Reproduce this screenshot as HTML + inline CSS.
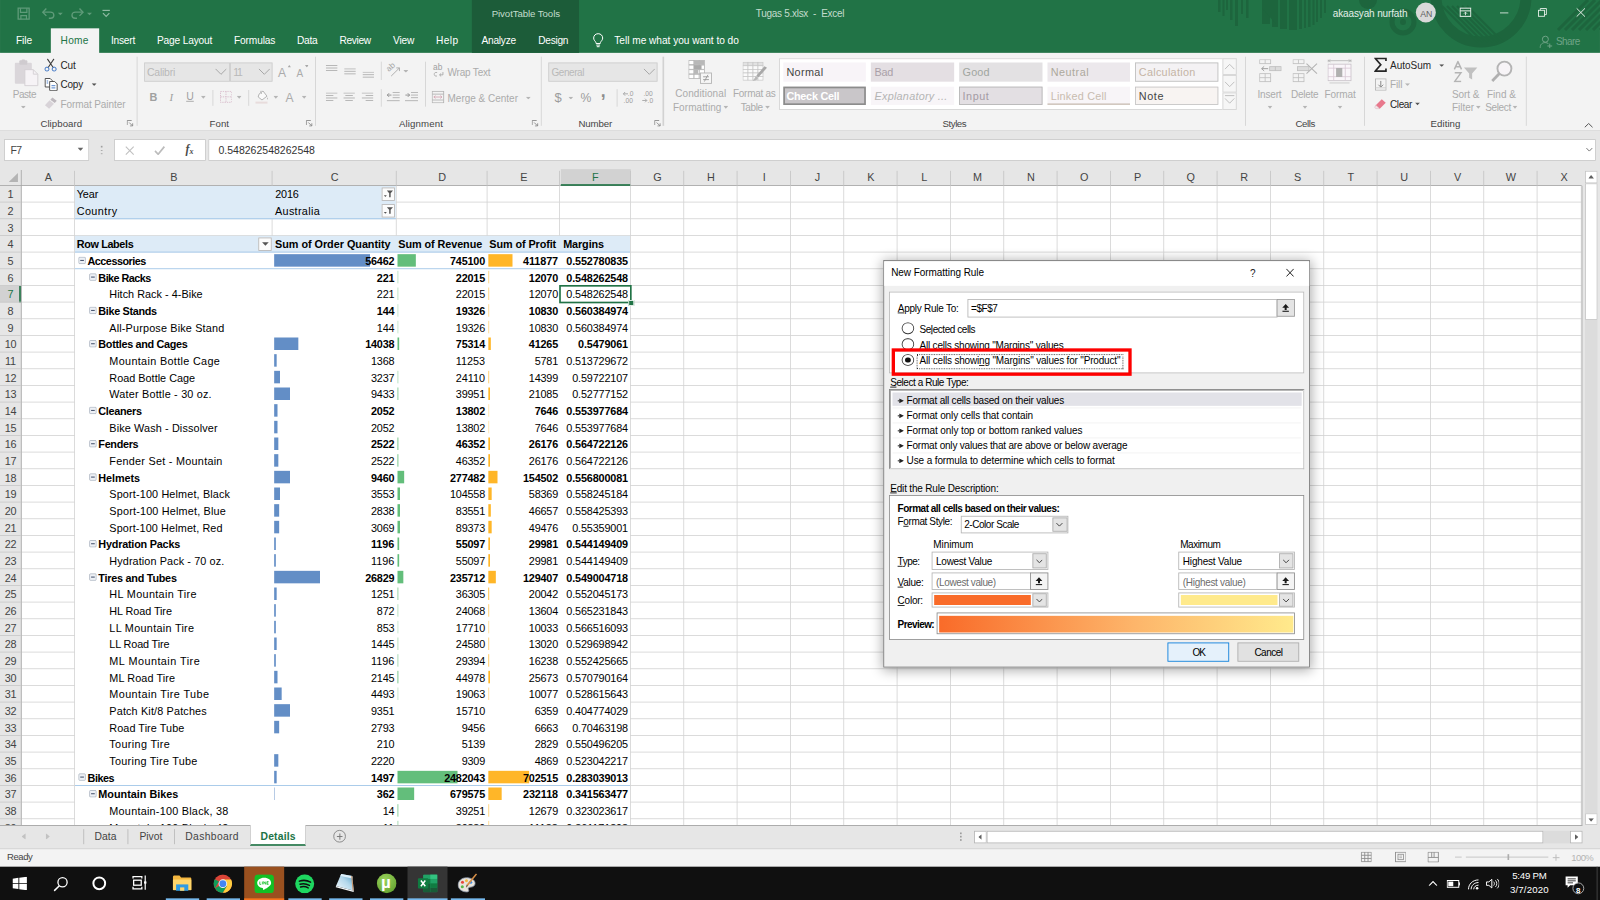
<!DOCTYPE html><html><head><meta charset="utf-8"><title>Excel</title><style>html,body{margin:0;padding:0}
body{width:1600px;height:900px;overflow:hidden;background:#fff;position:relative}
#s{position:absolute;left:0;top:0;width:1920px;height:1080px;transform:scale(.8333333);transform-origin:0 0;font-family:"Liberation Sans",sans-serif;font-size:13px;color:#262626;overflow:hidden;background:#fff}
#s div,#s span,#s svg{position:absolute;box-sizing:border-box;white-space:pre}
.t{line-height:1}
</style></head>
<body><div id="s">
<div style="left:0.00px;top:63.36px;width:1920.00px;height:92.88px;background:#f3f3f3;"></div>
<div style="left:0.00px;top:156.00px;width:1920.00px;height:1.08px;background:#d4d4d4;"></div>
<svg style="left:15.60px;top:70.80px;width:32.40px;height:33.60px;" viewBox="0 0 27 28"><rect x="1.5" y="3.5" width="17" height="21" rx="1" fill="#dad6da"/><rect x="6" y="1" width="8" height="4.5" rx="1" fill="#cfcbcf"/><rect x="8.3" y="0" width="3.4" height="2.5" rx="1" fill="#cfcbcf"/><path d="M11.5 10.5H20L24.5 15V26.5H11.5Z" fill="#f6f3f6" stroke="#d2ced2" stroke-width=".9"/><path d="M20 10.5V15H24.5" fill="none" stroke="#d2ced2" stroke-width=".9"/></svg>
<span style="top:106.72px;font-size:12.00px;line-height:1;color:#ababab;letter-spacing:-0.569px;left:15.36px;">Paste</span>
<svg style="left:25.32px;top:126.96px;width:6.00px;height:3.36px;" viewBox="0 0 5 2.8"><path d="M0 0H5 L2.5 2.8 Z" fill="#b5b5b5"/></svg>
<svg style="left:53.40px;top:70.20px;width:15.60px;height:16.20px;" viewBox="0 0 13 13.5"><path d="M3.2 .5L9 9.2M9.8 .5L4 9.2" stroke="#404040" stroke-width="1.1" fill="none"/><circle cx="2.8" cy="10.8" r="2" fill="none" stroke="#3b73c4" stroke-width="1"/><circle cx="10" cy="10.8" r="2" fill="none" stroke="#3b73c4" stroke-width="1"/></svg>
<span style="top:72.64px;font-size:12.00px;line-height:1;color:#262626;letter-spacing:-0.145px;left:72.48px;">Cut</span>
<svg style="left:52.80px;top:93.00px;width:16.80px;height:16.20px;" viewBox="0 0 14 13.5"><path d="M1 1H6L8 3V9.5H1Z" fill="#fff" stroke="#404040" stroke-width=".9"/><path d="M5.5 4H10.5L13 6.5V13H5.5Z" fill="#fff" stroke="#404040" stroke-width=".9"/><path d="M2.5 3.5H4M2.5 5.5H4M7.3 8.2H11.2M7.3 10.4H11.2" stroke="#3b73c4" stroke-width=".9"/></svg>
<span style="top:95.44px;font-size:12.00px;line-height:1;color:#262626;letter-spacing:-0.223px;left:72.48px;">Copy</span>
<svg style="left:109.80px;top:99.84px;width:6.00px;height:3.36px;" viewBox="0 0 5 2.8"><path d="M0 0H5 L2.5 2.8 Z" fill="#555"/></svg>
<svg style="left:53.40px;top:116.40px;width:16.80px;height:15.60px;" viewBox="0 0 14 13"><path d="M8.2 .8L12.6 4.2L10.6 6.4L6.2 3Z" fill="#bdb8bd"/><path d="M5.4 3.6L9.8 7L5 12.2L.8 8.6Z" fill="#d8d3d8"/></svg>
<span style="top:118.72px;font-size:12.00px;line-height:1;color:#ababab;letter-spacing:-0.097px;left:72.48px;">Format Painter</span>
<span style="top:142.10px;font-size:11.60px;line-height:1;color:#444444;letter-spacing:0.056px;left:48.48px;">Clipboard</span>
<svg style="left:152.40px;top:143.76px;width:8.40px;height:8.40px;" viewBox="0 0 7 7"><path d="M.5 5V.5H5" fill="none" stroke="#8a8a8a" stroke-width=".9"/><path d="M2.5 2.5L6 6M6 3.3V6H3.3" fill="none" stroke="#8a8a8a" stroke-width=".9"/></svg>
<div style="left:164.28px;top:68.40px;width:1.20px;height:82.80px;background:#d2d2d2;"></div>
<div style="left:172.80px;top:74.88px;width:102.72px;height:23.04px;background:#e6e6e6;border:1px solid #cdcdcd;"></div>
<div style="left:276.24px;top:74.88px;width:50.88px;height:23.04px;background:#e6e6e6;border:1px solid #cdcdcd;"></div>
<span style="top:80.53px;font-size:12.60px;line-height:1;color:#b9b9b9;letter-spacing:-0.301px;left:176.40px;">Calibri</span>
<span style="top:80.53px;font-size:12.60px;line-height:1;color:#b9b9b9;letter-spacing:-1.380px;left:279.84px;">11</span>
<svg style="left:258.00px;top:82.20px;width:14.40px;height:8.40px;" viewBox="0 0 12 7"><path d="M.5 .5L6 6L11.5 .5" fill="none" stroke="#a8a8a8" stroke-width="1"/></svg>
<svg style="left:309.60px;top:82.20px;width:14.40px;height:8.40px;" viewBox="0 0 12 7"><path d="M.5 .5L6 6L11.5 .5" fill="none" stroke="#a8a8a8" stroke-width="1"/></svg>
<span style="top:80.13px;font-size:14.50px;line-height:1;color:#ababab;left:333.60px;">A</span>
<svg style="left:345.12px;top:78.00px;width:4.32px;height:2.88px;" viewBox="0 0 3.6 2.4"><path d="M0 2.4H3.6L1.8 0Z" fill="#a8a8a8"/></svg>
<span style="top:82.24px;font-size:12.00px;line-height:1;color:#ababab;left:355.92px;">A</span>
<svg style="left:365.76px;top:78.00px;width:4.32px;height:2.88px;" viewBox="0 0 3.6 2.4"><path d="M0 0H3.6L1.8 2.4Z" fill="#a8a8a8"/></svg>
<span style="top:110.08px;font-size:13.00px;line-height:1;color:#a0a0a0;font-weight:bold;left:179.52px;">B</span>
<span style="top:110.08px;font-size:13.00px;line-height:1;color:#a0a0a0;font-style:italic;left:203.28px;font-family:'Liberation Serif',serif;">I</span>
<span style="top:110.41px;font-size:12.60px;line-height:1;color:#a0a0a0;left:223.44px;text-decoration:underline;">U</span>
<svg style="left:241.32px;top:115.44px;width:6.00px;height:3.36px;" viewBox="0 0 5 2.8"><path d="M0 0H5 L2.5 2.8 Z" fill="#b5b5b5"/></svg>
<div style="left:254.76px;top:108.00px;width:1.20px;height:19.20px;background:#d2d2d2;"></div>
<svg style="left:263.76px;top:109.20px;width:14.40px;height:14.40px;" viewBox="0 0 12 12"><path d="M.5 .5H11.5V11.5H.5ZM6 .5V11.5M.5 6H11.5" fill="none" stroke="#d7b9c9" stroke-width=".9" stroke-dasharray="1.3 1"/></svg>
<svg style="left:284.28px;top:115.44px;width:6.00px;height:3.36px;" viewBox="0 0 5 2.8"><path d="M0 0H5 L2.5 2.8 Z" fill="#b5b5b5"/></svg>
<div style="left:297.72px;top:108.00px;width:1.20px;height:19.20px;background:#d2d2d2;"></div>
<svg style="left:306.00px;top:108.00px;width:16.80px;height:16.80px;" viewBox="0 0 14 14"><path d="M4 4.2L8 1L12 6.2L7 10L3.2 7Z" fill="#fafafa" stroke="#ababab" stroke-width=".9"/><path d="M6 .8C5.6 2 6 3.2 7 4" fill="none" stroke="#ababab" stroke-width=".9"/><path d="M12.4 7.2C13 8.4 13.2 9 12.6 9.6C12 9 12 8.4 12.4 7.2Z" fill="#ababab"/><rect x=".5" y="11.6" width="12" height="2" fill="#e8dcdc"/></svg>
<svg style="left:327.72px;top:115.44px;width:6.00px;height:3.36px;" viewBox="0 0 5 2.8"><path d="M0 0H5 L2.5 2.8 Z" fill="#b5b5b5"/></svg>
<span style="top:110.01px;font-size:14.50px;line-height:1;color:#ababab;left:342.72px;">A</span>
<svg style="left:361.56px;top:115.44px;width:6.00px;height:3.36px;" viewBox="0 0 5 2.8"><path d="M0 0H5 L2.5 2.8 Z" fill="#b5b5b5"/></svg>
<span style="top:142.10px;font-size:11.60px;line-height:1;color:#444444;letter-spacing:0.017px;left:251.52px;">Font</span>
<svg style="left:367.20px;top:143.76px;width:8.40px;height:8.40px;" viewBox="0 0 7 7"><path d="M.5 5V.5H5" fill="none" stroke="#8a8a8a" stroke-width=".9"/><path d="M2.5 2.5L6 6M6 3.3V6H3.3" fill="none" stroke="#8a8a8a" stroke-width=".9"/></svg>
<div style="left:378.12px;top:68.40px;width:1.20px;height:82.80px;background:#d2d2d2;"></div>
<svg style="left:390.60px;top:78.00px;width:15.60px;height:12.00px;" viewBox="0 0 13 10"><path d="M0 0.5H11.5" stroke="#b0b0b0" stroke-width=".9"/><path d="M0 3H11.5" stroke="#b0b0b0" stroke-width=".9"/><path d="M0 5.5H11.5" stroke="#b0b0b0" stroke-width=".9"/></svg>
<svg style="left:412.56px;top:81.60px;width:15.60px;height:12.00px;" viewBox="0 0 13 10"><path d="M0 0.5H11.5" stroke="#b0b0b0" stroke-width=".9"/><path d="M0 3H11.5" stroke="#b0b0b0" stroke-width=".9"/><path d="M0 5.5H11.5" stroke="#b0b0b0" stroke-width=".9"/></svg>
<svg style="left:434.64px;top:86.40px;width:15.60px;height:12.00px;" viewBox="0 0 13 10"><path d="M0 0.5H11.5" stroke="#b0b0b0" stroke-width=".9"/><path d="M0 3H11.5" stroke="#b0b0b0" stroke-width=".9"/><path d="M0 5.5H11.5" stroke="#b0b0b0" stroke-width=".9"/></svg>
<div style="left:457.08px;top:74.40px;width:1.20px;height:21.60px;background:#d2d2d2;"></div>
<svg style="left:463.80px;top:75.00px;width:18.00px;height:18.00px;" viewBox="0 0 15 15"><text x="0" y="0" transform="translate(2.2 9.6) rotate(-42)" font-family="Liberation Sans" font-size="8.2" fill="#a4a4a4">ab</text><path d="M4.5 13.6L12.6 5.6M9.6 5.4H12.8V8.6" fill="none" stroke="#a8a8a8" stroke-width=".9"/></svg>
<svg style="left:483.72px;top:83.76px;width:6.00px;height:3.36px;" viewBox="0 0 5 2.8"><path d="M0 0H5 L2.5 2.8 Z" fill="#b5b5b5"/></svg>
<div style="left:510.12px;top:74.40px;width:1.20px;height:54.00px;background:#d2d2d2;"></div>
<span style="top:76.02px;font-size:10.00px;line-height:1;color:#a0a0a0;left:519.60px;">ab</span>
<svg style="left:519.60px;top:85.68px;width:13.20px;height:7.68px;" viewBox="0 0 11 6.4"><path d="M3.8 .8C1.6 .4 .8 1.6 .8 2.6C.8 3.8 1.8 4.6 3.6 4.4" fill="none" stroke="#a8a8a8" stroke-width=".9"/><path d="M9.6 .4V3.2H6.4M7.8 1.8L6.2 3.2L7.8 4.8" fill="none" stroke="#a8a8a8" stroke-width=".9"/></svg>
<span style="top:80.56px;font-size:12.00px;line-height:1;color:#ababab;letter-spacing:-0.233px;left:537.00px;">Wrap Text</span>
<svg style="left:390.60px;top:111.12px;width:15.60px;height:12.00px;" viewBox="0 0 13 10"><path d="M0 0.5H11.5" stroke="#b0b0b0" stroke-width=".9"/><path d="M0 3H7.5" stroke="#b0b0b0" stroke-width=".9"/><path d="M0 5.5H11.5" stroke="#b0b0b0" stroke-width=".9"/><path d="M0 8H7.5" stroke="#b0b0b0" stroke-width=".9"/></svg>
<svg style="left:412.20px;top:111.12px;width:15.60px;height:12.00px;" viewBox="0 0 13 10"><path d="M0 0.5H11.5" stroke="#b0b0b0" stroke-width=".9"/><path d="M2 3H9.5" stroke="#b0b0b0" stroke-width=".9"/><path d="M0 5.5H11.5" stroke="#b0b0b0" stroke-width=".9"/><path d="M2 8H9.5" stroke="#b0b0b0" stroke-width=".9"/></svg>
<svg style="left:434.40px;top:111.12px;width:15.60px;height:12.00px;" viewBox="0 0 13 10"><path d="M0 0.5H11.5" stroke="#b0b0b0" stroke-width=".9"/><path d="M4 3H11.5" stroke="#b0b0b0" stroke-width=".9"/><path d="M0 5.5H11.5" stroke="#b0b0b0" stroke-width=".9"/><path d="M4 8H11.5" stroke="#b0b0b0" stroke-width=".9"/></svg>
<div style="left:457.08px;top:106.80px;width:1.20px;height:21.60px;background:#d2d2d2;"></div>
<svg style="left:464.40px;top:110.40px;width:16.80px;height:13.20px;" viewBox="0 0 14 11"><path d="M6 .8H13M6 3.4H13M6 6H13M0 9H13" stroke="#b0b0b0" stroke-width=".9"/><path d="M4.8 3.4H.6M2.4 1.6L.6 3.4L2.4 5.2" fill="none" stroke="#8a8a8a" stroke-width=".9"/></svg>
<svg style="left:486.00px;top:110.40px;width:16.80px;height:13.20px;" viewBox="0 0 14 11"><path d="M6 .8H13M6 3.4H13M6 6H13M0 9H13" stroke="#b0b0b0" stroke-width=".9"/><path d="M.4 3.4H4.6M2.8 1.6L4.6 3.4L2.8 5.2" fill="none" stroke="#8a8a8a" stroke-width=".9"/></svg>
<svg style="left:518.40px;top:108.60px;width:15.60px;height:15.60px;" viewBox="0 0 13 13"><rect x=".5" y=".5" width="11.5" height="11.5" fill="none" stroke="#b4b4b4" stroke-width=".9"/><path d="M.5 3.3H12M.5 9.2H12" stroke="#b4b4b4" stroke-width=".9"/><path d="M2.2 6.2H10.3M3.8 4.8L2.2 6.2L3.8 7.6M8.7 4.8L10.3 6.2L8.7 7.6" stroke="#d4a8b4" fill="none" stroke-width=".9"/></svg>
<span style="top:111.76px;font-size:12.00px;line-height:1;color:#ababab;letter-spacing:-0.007px;left:537.00px;">Merge &amp; Center</span>
<svg style="left:631.32px;top:115.92px;width:6.00px;height:3.36px;" viewBox="0 0 5 2.8"><path d="M0 0H5 L2.5 2.8 Z" fill="#b5b5b5"/></svg>
<span style="top:142.10px;font-size:11.60px;line-height:1;color:#444444;letter-spacing:0.135px;left:478.80px;">Alignment</span>
<svg style="left:638.40px;top:143.76px;width:8.40px;height:8.40px;" viewBox="0 0 7 7"><path d="M.5 5V.5H5" fill="none" stroke="#8a8a8a" stroke-width=".9"/><path d="M2.5 2.5L6 6M6 3.3V6H3.3" fill="none" stroke="#8a8a8a" stroke-width=".9"/></svg>
<div style="left:648.96px;top:68.40px;width:1.20px;height:82.80px;background:#d2d2d2;"></div>
<div style="left:657.96px;top:75.36px;width:130.92px;height:22.68px;background:#e6e6e6;border:1px solid #cdcdcd;"></div>
<span style="top:81.04px;font-size:12.00px;line-height:1;color:#b9b9b9;letter-spacing:-0.510px;left:661.68px;">General</span>
<svg style="left:771.60px;top:82.20px;width:14.40px;height:8.40px;" viewBox="0 0 12 7"><path d="M.5 .5L6 6L11.5 .5" fill="none" stroke="#a8a8a8" stroke-width="1"/></svg>
<span style="top:109.43px;font-size:15.60px;line-height:1;color:#9c9c9c;left:665.28px;">$</span>
<svg style="left:682.44px;top:115.92px;width:6.00px;height:3.36px;" viewBox="0 0 5 2.8"><path d="M0 0H5 L2.5 2.8 Z" fill="#b5b5b5"/></svg>
<span style="top:110.04px;font-size:14.60px;line-height:1;color:#9c9c9c;left:696.72px;">%</span>
<span style="top:98.14px;font-size:21.00px;line-height:1;color:#8c8c8c;font-weight:bold;left:720.96px;">,</span>
<div style="left:740.04px;top:106.80px;width:1.20px;height:21.60px;background:#d2d2d2;"></div>
<svg style="left:747.00px;top:108.60px;width:16.80px;height:15.60px;" viewBox="0 0 14 13"><path d="M5.5 3H1M2.6 1.2L.8 3L2.6 4.8" fill="none" stroke="#a4a4a4" stroke-width=".9"/></svg>
<span style="top:109.15px;font-size:8.00px;line-height:1;color:#9c9c9c;left:753.36px;">.0</span>
<span style="top:117.31px;font-size:8.00px;line-height:1;color:#9c9c9c;left:748.32px;">.00</span>
<span style="top:109.15px;font-size:8.00px;line-height:1;color:#9c9c9c;left:772.08px;">.00</span>
<span style="top:117.31px;font-size:8.00px;line-height:1;color:#9c9c9c;left:777.12px;">.0</span>
<svg style="left:769.80px;top:116.64px;width:8.40px;height:7.20px;" viewBox="0 0 7 6"><path d="M.6 3H5M3.4 1.2L5.2 3L3.4 4.8" fill="none" stroke="#a4a4a4" stroke-width=".9"/></svg>
<span style="top:142.10px;font-size:11.60px;line-height:1;color:#444444;letter-spacing:-0.156px;left:694.08px;">Number</span>
<svg style="left:784.80px;top:143.76px;width:8.40px;height:8.40px;" viewBox="0 0 7 7"><path d="M.5 5V.5H5" fill="none" stroke="#8a8a8a" stroke-width=".9"/><path d="M2.5 2.5L6 6M6 3.3V6H3.3" fill="none" stroke="#8a8a8a" stroke-width=".9"/></svg>
<div style="left:795.48px;top:68.40px;width:1.20px;height:82.80px;background:#d2d2d2;"></div>
<svg style="left:826.20px;top:72.00px;width:30.00px;height:29.40px;" viewBox="0 0 25 24.5"><rect x="0.5" y="0.5" width="5.2" height="4.2" fill="#fff" stroke="#b4b4b4" stroke-width=".8"/><rect x="5.7" y="0.5" width="5.2" height="4.2" fill="#fff" stroke="#b4b4b4" stroke-width=".8"/><rect x="10.9" y="0.5" width="5.2" height="4.2" fill="#fff" stroke="#b4b4b4" stroke-width=".8"/><rect x="0.5" y="5.1" width="5.2" height="4.2" fill="#fff" stroke="#b4b4b4" stroke-width=".8"/><rect x="5.7" y="5.1" width="5.2" height="4.2" fill="#fff" stroke="#b4b4b4" stroke-width=".8"/><rect x="10.9" y="5.1" width="5.2" height="4.2" fill="#fff" stroke="#b4b4b4" stroke-width=".8"/><rect x="0.5" y="9.7" width="5.2" height="4.2" fill="#fff" stroke="#b4b4b4" stroke-width=".8"/><rect x="5.7" y="9.7" width="5.2" height="4.2" fill="#fff" stroke="#b4b4b4" stroke-width=".8"/><rect x="10.9" y="9.7" width="5.2" height="4.2" fill="#fff" stroke="#b4b4b4" stroke-width=".8"/><rect x="0.5" y="14.3" width="5.2" height="4.2" fill="#fff" stroke="#b4b4b4" stroke-width=".8"/><rect x="5.7" y="14.3" width="5.2" height="4.2" fill="#fff" stroke="#b4b4b4" stroke-width=".8"/><rect x="10.9" y="14.3" width="5.2" height="4.2" fill="#fff" stroke="#b4b4b4" stroke-width=".8"/><rect x="5.7" y=".5" width="10" height="4.2" fill="#b8b8b8"/><rect x="5.7" y="5.1" width="7.5" height="4.2" fill="#aaaaaa"/><rect x="5.7" y="9.7" width="4" height="4.2" fill="#b8b8b8"/><rect x="12.2" y="13" width="11" height="10.4" fill="#f6f6f6" stroke="#b4b4b4" stroke-width=".9"/><path d="M14.8 16.8H20.6M14.8 19.6H20.6M19.6 14.8L16 21.6" stroke="#9a9a9a" stroke-width=".9"/></svg>
<span style="top:106.48px;font-size:12.00px;line-height:1;color:#ababab;letter-spacing:0.105px;left:810.24px;">Conditional</span>
<span style="top:122.68px;font-size:12.00px;line-height:1;color:#ababab;letter-spacing:0.097px;left:807.48px;">Formatting</span>
<svg style="left:867.72px;top:127.20px;width:6.00px;height:3.36px;" viewBox="0 0 5 2.8"><path d="M0 0H5 L2.5 2.8 Z" fill="#b5b5b5"/></svg>
<svg style="left:891.24px;top:73.80px;width:31.20px;height:25.20px;" viewBox="0 0 26 21"><rect x="0.5" y="0.5" width="5" height="3.6" fill="#e2e2e2" stroke="#c6c6c6" stroke-width=".7"/><rect x="5.5" y="0.5" width="5" height="3.6" fill="#e2e2e2" stroke="#c6c6c6" stroke-width=".7"/><rect x="10.5" y="0.5" width="5" height="3.6" fill="#e2e2e2" stroke="#c6c6c6" stroke-width=".7"/><rect x="15.5" y="0.5" width="5" height="3.6" fill="#e2e2e2" stroke="#c6c6c6" stroke-width=".7"/><rect x="0.5" y="4.1" width="5" height="3.6" fill="#fafafa" stroke="#c6c6c6" stroke-width=".7"/><rect x="5.5" y="4.1" width="5" height="3.6" fill="#fafafa" stroke="#c6c6c6" stroke-width=".7"/><rect x="10.5" y="4.1" width="5" height="3.6" fill="#fafafa" stroke="#c6c6c6" stroke-width=".7"/><rect x="15.5" y="4.1" width="5" height="3.6" fill="#fafafa" stroke="#c6c6c6" stroke-width=".7"/><rect x="0.5" y="7.7" width="5" height="3.6" fill="#fafafa" stroke="#c6c6c6" stroke-width=".7"/><rect x="5.5" y="7.7" width="5" height="3.6" fill="#fafafa" stroke="#c6c6c6" stroke-width=".7"/><rect x="10.5" y="7.7" width="5" height="3.6" fill="#fafafa" stroke="#c6c6c6" stroke-width=".7"/><rect x="15.5" y="7.7" width="5" height="3.6" fill="#fafafa" stroke="#c6c6c6" stroke-width=".7"/><rect x="0.5" y="11.3" width="5" height="3.6" fill="#fafafa" stroke="#c6c6c6" stroke-width=".7"/><rect x="5.5" y="11.3" width="5" height="3.6" fill="#fafafa" stroke="#c6c6c6" stroke-width=".7"/><rect x="10.5" y="11.3" width="5" height="3.6" fill="#fafafa" stroke="#c6c6c6" stroke-width=".7"/><rect x="15.5" y="11.3" width="5" height="3.6" fill="#fafafa" stroke="#c6c6c6" stroke-width=".7"/><rect x="0.5" y="14.9" width="5" height="3.6" fill="#fafafa" stroke="#c6c6c6" stroke-width=".7"/><rect x="5.5" y="14.9" width="5" height="3.6" fill="#fafafa" stroke="#c6c6c6" stroke-width=".7"/><rect x="10.5" y="14.9" width="5" height="3.6" fill="#fafafa" stroke="#c6c6c6" stroke-width=".7"/><rect x="15.5" y="14.9" width="5" height="3.6" fill="#fafafa" stroke="#c6c6c6" stroke-width=".7"/><path d="M24.5 6L16 15.5L13.8 14L22 4.5Z" fill="#a8a8a8"/><path d="M13.4 14.6L15.6 16.2C14.8 18.6 12.4 19.4 10 19C11.6 18 12 16.2 13.4 14.6Z" fill="#b8b8b8"/></svg>
<span style="top:106.48px;font-size:12.00px;line-height:1;color:#ababab;letter-spacing:-0.335px;left:879.60px;">Format as</span>
<span style="top:122.68px;font-size:12.00px;line-height:1;color:#ababab;letter-spacing:-0.458px;left:888.84px;">Table</span>
<svg style="left:918.12px;top:127.20px;width:6.00px;height:3.36px;" viewBox="0 0 5 2.8"><path d="M0 0H5 L2.5 2.8 Z" fill="#b5b5b5"/></svg>
<div style="left:935.04px;top:70.08px;width:549.12px;height:61.44px;background:#ffffff;border:1px solid #d2d2d2;"></div>
<div style="left:939.60px;top:75.36px;width:99.60px;height:22.68px;background:#f8f4f8;"></div><span style="top:80.44px;font-size:13.00px;line-height:1;color:#444444;letter-spacing:0.438px;left:943.68px;">Normal</span>
<div style="left:1045.32px;top:75.36px;width:99.60px;height:22.68px;background:#e4dfe3;"></div><span style="top:80.44px;font-size:13.00px;line-height:1;color:#aa9fa8;letter-spacing:-0.310px;left:1049.40px;">Bad</span>
<div style="left:1151.04px;top:75.36px;width:99.60px;height:22.68px;background:#e3e1e3;"></div><span style="top:80.44px;font-size:13.00px;line-height:1;color:#9fa59f;letter-spacing:0.150px;left:1155.12px;">Good</span>
<div style="left:1256.76px;top:75.36px;width:99.60px;height:22.68px;background:#ece8ec;"></div><span style="top:80.44px;font-size:13.00px;line-height:1;color:#aca89c;letter-spacing:0.613px;left:1260.84px;">Neutral</span>
<div style="left:1362.48px;top:75.36px;width:99.60px;height:22.68px;background:#f4f2f4;border:1px solid #bdbdbd;"></div><span style="top:80.44px;font-size:13.00px;line-height:1;color:#c4b4a4;letter-spacing:0.339px;left:1366.56px;">Calculation</span>
<div style="left:939.60px;top:104.40px;width:99.60px;height:21.12px;background:#c9c6c9;border:2px solid #8c8c8c;"></div><span style="top:108.52px;font-size:13.00px;line-height:1;color:#ffffff;font-weight:bold;letter-spacing:-0.299px;left:943.68px;">Check Cell</span>
<div style="left:1045.32px;top:104.40px;width:99.60px;height:21.12px;background:#f8f5f8;"></div><span style="top:108.52px;font-size:13.00px;line-height:1;color:#b4b4b4;font-style:italic;letter-spacing:0.308px;left:1049.40px;">Explanatory ...</span>
<div style="left:1151.04px;top:104.40px;width:99.60px;height:21.12px;background:#e3dfe3;border:1px solid #b4b4b4;"></div><span style="top:108.52px;font-size:13.00px;line-height:1;color:#a39ba3;letter-spacing:0.601px;left:1155.12px;">Input</span>
<div style="left:1256.76px;top:104.40px;width:99.60px;height:21.12px;background:#f8f5f8;border-bottom:2px solid #d2c8c0;"></div><span style="top:108.52px;font-size:13.00px;line-height:1;color:#c8bcb0;letter-spacing:0.262px;left:1260.84px;">Linked Cell</span>
<div style="left:1362.48px;top:104.40px;width:99.60px;height:21.12px;background:#f8f4f2;border:1px solid #c4c4c4;"></div><span style="top:108.52px;font-size:13.00px;line-height:1;color:#444444;letter-spacing:0.695px;left:1366.56px;">Note</span>
<div style="left:1467.24px;top:70.08px;width:16.92px;height:20.40px;background:#f6f6f6;border:1px solid #d2d2d2;"></div>
<div style="left:1467.24px;top:90.48px;width:16.92px;height:20.40px;background:#f6f6f6;border:1px solid #d2d2d2;"></div>
<div style="left:1467.24px;top:110.88px;width:16.92px;height:20.64px;background:#f6f6f6;border:1px solid #d2d2d2;"></div>
<svg style="left:1469.40px;top:75.60px;width:13.20px;height:8.40px;" viewBox="0 0 11 7"><path d="M.8 5.8L5.5 1L10.2 5.8" fill="none" stroke="#c0c0c0" stroke-width="1"/></svg>
<svg style="left:1469.40px;top:96.60px;width:13.20px;height:8.40px;" viewBox="0 0 11 7"><path d="M.8 1L5.5 5.8L10.2 1" fill="none" stroke="#c0c0c0" stroke-width="1"/></svg>
<svg style="left:1469.40px;top:114.00px;width:13.20px;height:12.00px;" viewBox="0 0 11 10"><path d="M.8 .6H10.2" stroke="#c0c0c0" stroke-width="1"/><path d="M.8 3.4L5.5 8.2L10.2 3.4" fill="none" stroke="#c0c0c0" stroke-width="1"/></svg>
<span style="top:142.10px;font-size:11.60px;line-height:1;color:#444444;letter-spacing:-0.525px;left:1131.00px;">Styles</span>
<div style="left:1494.00px;top:68.40px;width:1.20px;height:82.80px;background:#d2d2d2;"></div>
<svg style="left:1510.56px;top:71.40px;width:27.60px;height:28.80px;" viewBox="0 0 23 24"><rect x=".5" y=".5" width="11" height="4" fill="none" stroke="#bdbdbd" stroke-width=".8"/><path d="M6 .5V4.5" stroke="#bdbdbd" stroke-width=".8"/><rect x="10.5" y="7.5" width="11.5" height="4" fill="#dcdcdc" stroke="#bdbdbd" stroke-width=".8"/><path d="M16.2 7.5V11.5" stroke="#bdbdbd" stroke-width=".8"/><path d="M9 9.5H2.5M5 7.2L2.5 9.5L5 11.8" fill="none" stroke="#a0a0a0" stroke-width="1"/><rect x=".5" y="14.5" width="11" height="8" fill="none" stroke="#bdbdbd" stroke-width=".8"/><path d="M6 14.5V22.5M.5 18.5H11.5" stroke="#bdbdbd" stroke-width=".8"/></svg>
<span style="top:106.60px;font-size:12.00px;line-height:1;color:#ababab;letter-spacing:-0.182px;left:1508.88px;">Insert</span>
<svg style="left:1520.52px;top:127.20px;width:6.00px;height:3.36px;" viewBox="0 0 5 2.8"><path d="M0 0H5 L2.5 2.8 Z" fill="#b5b5b5"/></svg>
<svg style="left:1551.24px;top:71.40px;width:31.20px;height:28.80px;" viewBox="0 0 26 24"><rect x=".5" y=".5" width="11" height="4" fill="none" stroke="#bdbdbd" stroke-width=".8"/><path d="M6 .5V4.5" stroke="#bdbdbd" stroke-width=".8"/><rect x="5" y="7.5" width="11.5" height="4" fill="#dcdcdc" stroke="#bdbdbd" stroke-width=".8"/><path d="M14 4.5L24.5 14.5M24.5 4.5L14 14.5" stroke="#b4b4b4" stroke-width="1.1"/><rect x=".5" y="14.5" width="11" height="8" fill="none" stroke="#bdbdbd" stroke-width=".8"/><path d="M6 14.5V22.5M.5 18.5H11.5" stroke="#bdbdbd" stroke-width=".8"/></svg>
<span style="top:106.60px;font-size:12.00px;line-height:1;color:#ababab;letter-spacing:-0.321px;left:1549.20px;">Delete</span>
<svg style="left:1562.52px;top:127.20px;width:6.00px;height:3.36px;" viewBox="0 0 5 2.8"><path d="M0 0H5 L2.5 2.8 Z" fill="#b5b5b5"/></svg>
<svg style="left:1593.24px;top:71.40px;width:30.00px;height:30.00px;" viewBox="0 0 25 25"><path d="M.5 1.5H23.5M.5 .2V3M23.5 .2V3M3 .3L.8 1.5L3 2.7M21 .3L23.2 1.5L21 2.7" fill="none" stroke="#b4b4b4" stroke-width=".8"/><rect x=".5" y="5" width="23" height="16.5" fill="#faf6fa" stroke="#c8c0c8" stroke-width=".8"/><path d="M6.2 5V21.5M17.8 5V21.5M.5 9H23.5M.5 17.5H23.5" stroke="#d8c8d4" stroke-width=".8"/><rect x="8.6" y="8.8" width="6.2" height="9" fill="#b0b0b0"/><path d="M2 23.8H22" stroke="#c4c4c4" stroke-width=".8"/></svg>
<span style="top:106.60px;font-size:12.00px;line-height:1;color:#ababab;letter-spacing:-0.114px;left:1589.52px;">Format</span>
<svg style="left:1605.24px;top:127.20px;width:6.00px;height:3.36px;" viewBox="0 0 5 2.8"><path d="M0 0H5 L2.5 2.8 Z" fill="#b5b5b5"/></svg>
<span style="top:142.10px;font-size:11.60px;line-height:1;color:#444444;letter-spacing:-0.525px;left:1554.60px;">Cells</span>
<div style="left:1636.80px;top:68.40px;width:1.20px;height:82.80px;background:#d2d2d2;"></div>
<svg style="left:1649.16px;top:69.36px;width:15.60px;height:17.28px;" viewBox="0 0 13 14.4"><path d="M11.8 3.4V.8H1L6.6 7.2L1 13.6H11.8V11" fill="none" stroke="#262626" stroke-width="1.7"/></svg>
<span style="top:72.64px;font-size:12.00px;line-height:1;color:#262626;letter-spacing:-0.023px;left:1668.00px;">AutoSum</span>
<svg style="left:1727.40px;top:77.04px;width:6.00px;height:3.36px;" viewBox="0 0 5 2.8"><path d="M0 0H5 L2.5 2.8 Z" fill="#555"/></svg>
<svg style="left:1650.00px;top:94.20px;width:14.40px;height:15.00px;" viewBox="0 0 12 12.5"><rect x=".5" y=".5" width="10.6" height="11.4" fill="#f4f4f4" stroke="#b4b4b4" stroke-width=".9"/><path d="M5.8 2.6V8.6M3.4 6.4L5.8 8.8L8.2 6.4" fill="none" stroke="#8a8a8a" stroke-width="1"/><path d="M.5 9.5H11" stroke="#c8c8c8" stroke-width=".8"/></svg>
<span style="top:95.68px;font-size:12.00px;line-height:1;color:#ababab;letter-spacing:-0.142px;left:1668.00px;">Fill</span>
<svg style="left:1685.64px;top:99.84px;width:6.00px;height:3.36px;" viewBox="0 0 5 2.8"><path d="M0 0H5 L2.5 2.8 Z" fill="#b5b5b5"/></svg>
<svg style="left:1649.40px;top:117.60px;width:15.00px;height:13.20px;" viewBox="0 0 12.5 11"><path d="M7.6 .8L11.6 4.4L5.6 10.4L1.6 6.8Z" fill="#e8788c"/><path d="M1.6 6.8L5.6 10.4L4.4 10.6H2L.6 9Z" fill="#f6e4e8" stroke="#d0a8b0" stroke-width=".5"/></svg>
<span style="top:118.84px;font-size:12.00px;line-height:1;color:#262626;letter-spacing:-0.455px;left:1668.00px;">Clear</span>
<svg style="left:1698.36px;top:123.36px;width:6.00px;height:3.36px;" viewBox="0 0 5 2.8"><path d="M0 0H5 L2.5 2.8 Z" fill="#555"/></svg>
<svg style="left:1743.60px;top:72.60px;width:30.00px;height:26.40px;" viewBox="0 0 25 22"><path d="M1 8.6L4.6 .8L8.2 8.6M2.4 5.8H6.8" fill="none" stroke="#b4b4b4" stroke-width="1.5"/><path d="M1.4 12H7.6L1.4 20.6H7.8" fill="none" stroke="#b4b4b4" stroke-width="1.5"/><path d="M10.6 6.6H24L18.8 12.6V18.6L15.8 16.8V12.6Z" fill="#c0c0c0"/></svg>
<span style="top:106.60px;font-size:12.00px;line-height:1;color:#ababab;letter-spacing:-0.098px;left:1742.40px;">Sort &amp;</span>
<span style="top:122.68px;font-size:12.00px;line-height:1;color:#ababab;letter-spacing:-0.044px;left:1742.40px;">Filter</span>
<svg style="left:1771.32px;top:127.20px;width:6.00px;height:3.36px;" viewBox="0 0 5 2.8"><path d="M0 0H5 L2.5 2.8 Z" fill="#b5b5b5"/></svg>
<svg style="left:1788.60px;top:72.00px;width:27.60px;height:27.60px;" viewBox="0 0 23 23"><circle cx="13.6" cy="8.6" r="7" fill="#f7f4f7" stroke="#b4b4b4" stroke-width="1.9"/><path d="M8.6 13.6L1.4 21" stroke="#b0b0b0" stroke-width="2.8"/></svg>
<span style="top:106.60px;font-size:12.00px;line-height:1;color:#ababab;letter-spacing:0.020px;left:1784.40px;">Find &amp;</span>
<span style="top:122.68px;font-size:12.00px;line-height:1;color:#ababab;letter-spacing:-0.439px;left:1782.24px;">Select</span>
<svg style="left:1815.48px;top:127.20px;width:6.00px;height:3.36px;" viewBox="0 0 5 2.8"><path d="M0 0H5 L2.5 2.8 Z" fill="#b5b5b5"/></svg>
<span style="top:142.10px;font-size:11.60px;line-height:1;color:#444444;letter-spacing:0.042px;left:1716.72px;">Editing</span>
<div style="left:1831.20px;top:68.40px;width:1.20px;height:82.80px;background:#d2d2d2;"></div>
<svg style="left:1901.40px;top:147.00px;width:10.80px;height:7.20px;" viewBox="0 0 9 6"><path d="M.6 4.8L4.5 1L8.4 4.8" fill="none" stroke="#555" stroke-width="1"/></svg>
<svg style="left:0.00px;top:0.00px;width:1920.00px;height:64.08px;" viewBox="0 0 1600 53.4"><rect x="0" y="0" width="1600" height="52.85" fill="#217346"/></svg>
<svg style="left:1416.00px;top:0.00px;width:504.00px;height:63.36px;" viewBox="0 0 420 52.8"><rect x="38" y="0" width="2.5" height="12" fill="#1d653d"/><rect x="42.5" y="0" width="2" height="16" fill="#1d653d"/><rect x="46" y="0" width="2" height="10" fill="#1d653d"/><rect x="50" y="0" width="2.5" height="20" fill="#1d653d"/><rect x="55" y="0" width="3" height="26" fill="#1d653d"/><rect x="61" y="0" width="2" height="14" fill="#1d653d"/><rect x="66" y="0" width="2.5" height="18" fill="#1d653d"/><rect x="82" y="0" width="8" height="24" fill="#1d653d"/><rect x="92" y="0" width="6" height="27" fill="#1d653d"/><rect x="100" y="0" width="7" height="29" fill="#1d653d"/><rect x="109" y="0" width="8" height="30" fill="#1d653d"/><rect x="119" y="0" width="3" height="29" fill="#1d653d"/><rect x="124" y="0" width="2" height="28" fill="#1d653d"/><rect x="128" y="0" width="2.5" height="27" fill="#1d653d"/><rect x="132.5" y="0" width="2" height="25" fill="#1d653d"/><rect x="136" y="0" width="2" height="22" fill="#1d653d"/><rect x="140" y="0" width="2" height="18" fill="#1d653d"/><rect x="144" y="0" width="2" height="13" fill="#1d653d"/><path d="M82 0 L82 8 L96 24 L96 0 Z" fill="#1d653d"/><circle cx="188" cy="0" r="9" fill="#1d653d"/><circle cx="223" cy="22" r="11" fill="none" stroke="#1d653d" stroke-width="5"/><circle cx="223" cy="22" r="3" fill="#1d653d"/><circle cx="301" cy="-3" r="45" fill="none" stroke="#1d653d" stroke-width="11"/><path d="M262 6 L298 42" stroke="#1d653d" stroke-width="2.2" fill="none"/><path d="M267 6 L303 42" stroke="#1d653d" stroke-width="2.2" fill="none"/><path d="M272 6 L308 42" stroke="#1d653d" stroke-width="2.2" fill="none"/><path d="M277 6 L313 42" stroke="#1d653d" stroke-width="2.2" fill="none"/><path d="M282 6 L318 42" stroke="#1d653d" stroke-width="2.2" fill="none"/><path d="M287 6 L323 42" stroke="#1d653d" stroke-width="2.2" fill="none"/><path d="M378 30 L408 0" stroke="#1d653d" stroke-width="3" fill="none"/><path d="M385 30 L415 0" stroke="#1d653d" stroke-width="3" fill="none"/><path d="M392 30 L422 0" stroke="#1d653d" stroke-width="3" fill="none"/><path d="M399 30 L429 0" stroke="#1d653d" stroke-width="3" fill="none"/><path d="M406 30 L436 0" stroke="#1d653d" stroke-width="3" fill="none"/><path d="M413 30 L443 0" stroke="#1d653d" stroke-width="3" fill="none"/><path d="M420 30 L450 0" stroke="#1d653d" stroke-width="3" fill="none"/></svg>
<svg style="left:566.40px;top:0.00px;width:128.88px;height:64.08px;" viewBox="0 0 107.4 53.4"><rect x="0" y="0" width="107.4" height="52.85" fill="#1c5c39"/></svg>
<div style="left:60.96px;top:33.60px;width:58.08px;height:30.24px;background:#f3f3f3;"></div>
<span style="top:10.34px;font-size:11.60px;line-height:1;color:#c3dccd;letter-spacing:-0.103px;left:590.04px;">PivotTable Tools</span>
<span style="top:10.00px;font-size:12.00px;line-height:1;color:#c3dccd;letter-spacing:-0.336px;left:906.84px;">Tugas 5.xlsx  -  Excel</span>
<span style="top:10.00px;font-size:12.00px;line-height:1;color:#e4efe8;letter-spacing:-0.166px;left:1599.36px;">akaasyah nurfath</span>
<div style="left:1699.44px;top:3.12px;width:24.00px;height:24.00px;background:#d9d9d9;border-radius:50%;"></div>
<span style="top:11.03px;font-size:10.50px;line-height:1;color:#5e5e5e;left:1704.27px;">AN</span>
<svg style="left:1750.80px;top:8.40px;width:15.60px;height:13.20px;" viewBox="0 0 13 11"><rect x="1" y="1.5" width="10.6" height="8.2" fill="none" stroke="#e6efe9" stroke-width="1"/><path d="M1 4.2H11.6" stroke="#e6efe9" stroke-width="1"/><path d="M6.3 8.6V5.6M4.8 7L6.3 5.5L7.8 7" stroke="#e6efe9" stroke-width=".9" fill="none"/></svg>
<div style="left:1799.64px;top:14.76px;width:10.80px;height:1.08px;background:#e6efe9;"></div>
<svg style="left:1845.00px;top:9.00px;width:12.00px;height:12.00px;" viewBox="0 0 10 10"><rect x="1" y="2.8" width="6" height="6" fill="none" stroke="#e6efe9" stroke-width=".9"/><path d="M2.8 2.8V1H8.9V7.1H7" fill="none" stroke="#e6efe9" stroke-width=".9"/></svg>
<svg style="left:1891.20px;top:9.00px;width:12.00px;height:12.00px;" viewBox="0 0 10 10"><path d="M.8 .8L9.2 9.2M9.2 .8L.8 9.2" stroke="#e6efe9" stroke-width="1" fill="none"/></svg>
<svg style="left:1846.80px;top:41.64px;width:16.80px;height:16.80px;" viewBox="0 0 14 14"><circle cx="6.2" cy="4.2" r="3" fill="none" stroke="#6fa487" stroke-width="1"/><path d="M1 12.8C1 9 3.5 7.6 6 7.6C7.3 7.6 8.4 8 9.2 8.6" fill="none" stroke="#6fa487" stroke-width="1"/><path d="M10.6 8.6V13.4M8.2 11H13" stroke="#6fa487" stroke-width="1"/></svg>
<span style="top:43.84px;font-size:12.00px;line-height:1;color:#6fa487;letter-spacing:-0.692px;left:1867.08px;">Share</span>
<span style="top:43.19px;font-size:12.20px;line-height:1;color:#ffffff;letter-spacing:-0.115px;left:19.20px;">File</span>
<span style="top:43.19px;font-size:12.20px;line-height:1;color:#ffffff;letter-spacing:-0.285px;left:133.20px;">Insert</span>
<span style="top:43.19px;font-size:12.20px;line-height:1;color:#ffffff;letter-spacing:-0.196px;left:188.40px;">Page Layout</span>
<span style="top:43.19px;font-size:12.20px;line-height:1;color:#ffffff;letter-spacing:-0.160px;left:280.80px;">Formulas</span>
<span style="top:43.19px;font-size:12.20px;line-height:1;color:#ffffff;letter-spacing:-0.293px;left:356.40px;">Data</span>
<span style="top:43.19px;font-size:12.20px;line-height:1;color:#ffffff;letter-spacing:-0.407px;left:407.40px;">Review</span>
<span style="top:43.19px;font-size:12.20px;line-height:1;color:#ffffff;letter-spacing:-0.166px;left:471.60px;">View</span>
<span style="top:43.19px;font-size:12.20px;line-height:1;color:#ffffff;letter-spacing:0.477px;left:523.20px;">Help</span>
<span style="top:43.19px;font-size:12.20px;line-height:1;color:#ffffff;letter-spacing:-0.286px;left:577.80px;">Analyze</span>
<span style="top:43.19px;font-size:12.20px;line-height:1;color:#ffffff;letter-spacing:-0.309px;left:645.84px;">Design</span>
<span style="top:43.19px;font-size:12.20px;line-height:1;color:#217346;letter-spacing:0.324px;left:72.72px;">Home</span>
<span style="top:43.19px;font-size:12.20px;line-height:1;color:#ffffff;letter-spacing:-0.034px;left:737.16px;">Tell me what you want to do</span>
<svg style="left:710.40px;top:39.00px;width:15.60px;height:19.20px;" viewBox="0 0 13 16"><path d="M6.5 1.2C3.8 1.2 2 3.1 2 5.5C2 7.3 3 8.2 3.8 9.2C4.2 9.8 4.4 10.4 4.4 11H8.6C8.6 10.4 8.8 9.8 9.2 9.2C10 8.2 11 7.3 11 5.5C11 3.1 9.2 1.2 6.5 1.2Z" fill="none" stroke="#fff" stroke-width="1"/><path d="M4.6 12.6H8.4M5.1 14.2H7.9" stroke="#fff" stroke-width="1"/></svg>
<svg style="left:20.40px;top:8.40px;width:16.80px;height:16.80px;" viewBox="0 0 14 14"><path d="M1.5 1.5H12.5V12.5H1.5Z" fill="none" stroke="#5f9b79" stroke-width="1.3"/><path d="M3.8 1.5V5.8H10.2V1.5" fill="none" stroke="#5f9b79" stroke-width="1.2"/><path d="M4.2 12.5V9H9.8V12.5" fill="none" stroke="#5f9b79" stroke-width="1.2"/></svg>
<svg style="left:49.20px;top:8.40px;width:26.40px;height:16.80px;" viewBox="0 0 22 14"><path d="M2 5.5H9.5C11.7 5.5 13 6.8 13 8.6C13 10.4 11.7 11.6 9.8 11.6H8" fill="none" stroke="#5f9b79" stroke-width="1.4"/><path d="M5.5 1.8L2 5.5L5.5 9.2" fill="none" stroke="#5f9b79" stroke-width="1.4"/><path d="M17 6L19.5 8.6L22 6Z" fill="#5f9b79"/></svg>
<svg style="left:84.00px;top:8.40px;width:28.80px;height:16.80px;" viewBox="0 0 24 14"><path d="M12.5 5.5H5.5C3.3 5.5 2 6.8 2 8.6C2 10.4 3.3 11.6 5.2 11.6H7" fill="none" stroke="#5f9b79" stroke-width="1.4"/><path d="M9.5 1.8L13 5.5L9.5 9.2" fill="none" stroke="#5f9b79" stroke-width="1.4"/><path d="M17 6L19.5 8.6L22 6Z" fill="#5f9b79"/></svg>
<svg style="left:122.40px;top:10.80px;width:10.80px;height:10.80px;" viewBox="0 0 9 9"><path d="M.8 1.2H8.2" stroke="#8fbaa2" stroke-width="1.1"/><path d="M1.3 4L4.5 7.2L7.7 4" fill="none" stroke="#8fbaa2" stroke-width="1.2"/></svg>
<div style="left:0.00px;top:157.08px;width:1920.00px;height:66.00px;background:#e6e6e6;"></div>
<div style="left:5.16px;top:167.40px;width:101.76px;height:25.20px;background:#fff;border:1px solid #c6c6c6;"></div>
<span style="top:174.61px;font-size:12.60px;line-height:1;color:#444;letter-spacing:-0.512px;left:12.48px;">F7</span>
<svg style="left:93.00px;top:177.12px;width:7.20px;height:4.08px;" viewBox="0 0 6 3.4"><path d="M0 0H6L3 3.4Z" fill="#666"/></svg>
<div style="left:121.20px;top:175.44px;width:1.32px;height:1.32px;background:#a0a0a0;"></div>
<div style="left:121.20px;top:179.76px;width:1.32px;height:1.32px;background:#a0a0a0;"></div>
<div style="left:121.20px;top:184.08px;width:1.32px;height:1.32px;background:#a0a0a0;"></div>
<div style="left:137.04px;top:167.40px;width:110.16px;height:25.20px;background:#fff;border:1px solid #c6c6c6;"></div>
<svg style="left:150.00px;top:174.60px;width:11.40px;height:11.40px;" viewBox="0 0 9.5 9.5"><path d="M.8 .8L8.7 8.7M8.7 .8L.8 8.7" stroke="#c0c0c0" stroke-width="1.1" fill="none"/></svg>
<svg style="left:185.40px;top:174.60px;width:13.20px;height:11.40px;" viewBox="0 0 11 9.5"><path d="M.8 5L4 8.4L10.2 .8" stroke="#bcbcbc" stroke-width="1.7" fill="none"/></svg>
<span style="top:173.43px;font-size:14.00px;line-height:1;color:#4a4a4a;font-weight:bold;font-style:italic;left:222.48px;font-family:'Liberation Serif',serif;">f</span>
<span style="top:178.20px;font-size:9.50px;line-height:1;color:#4a4a4a;font-weight:bold;font-style:italic;left:227.52px;font-family:'Liberation Serif',serif;">x</span>
<div style="left:249.84px;top:167.40px;width:1665.12px;height:25.20px;background:#fff;border:1px solid #c6c6c6;"></div>
<span style="top:174.85px;font-size:12.60px;line-height:1;color:#333;letter-spacing:0.018px;left:262.08px;">0.548262548262548</span>
<svg style="left:1903.20px;top:177.00px;width:8.40px;height:5.40px;" viewBox="0 0 7 4.5"><path d="M.6 .6L3.5 3.6L6.4 .6" fill="none" stroke="#777" stroke-width="1"/></svg>
<div style="left:0.00px;top:223.00px;width:1898.40px;height:767.00px;background:#fff;"></div>
<div style="left:26.00px;top:242.00px;width:1872.40px;height:1.00px;background:#d4d4d4;"></div>
<div style="left:26.00px;top:262.00px;width:1872.40px;height:1.00px;background:#d4d4d4;"></div>
<div style="left:26.00px;top:282.00px;width:1872.40px;height:1.00px;background:#d4d4d4;"></div>
<div style="left:26.00px;top:302.00px;width:1872.40px;height:1.00px;background:#d4d4d4;"></div>
<div style="left:26.00px;top:322.00px;width:1872.40px;height:1.00px;background:#d4d4d4;"></div>
<div style="left:26.00px;top:342.00px;width:1872.40px;height:1.00px;background:#d4d4d4;"></div>
<div style="left:26.00px;top:362.00px;width:1872.40px;height:1.00px;background:#d4d4d4;"></div>
<div style="left:26.00px;top:382.00px;width:1872.40px;height:1.00px;background:#d4d4d4;"></div>
<div style="left:26.00px;top:402.00px;width:1872.40px;height:1.00px;background:#d4d4d4;"></div>
<div style="left:26.00px;top:422.00px;width:1872.40px;height:1.00px;background:#d4d4d4;"></div>
<div style="left:26.00px;top:442.00px;width:1872.40px;height:1.00px;background:#d4d4d4;"></div>
<div style="left:26.00px;top:462.00px;width:1872.40px;height:1.00px;background:#d4d4d4;"></div>
<div style="left:26.00px;top:482.00px;width:1872.40px;height:1.00px;background:#d4d4d4;"></div>
<div style="left:26.00px;top:502.00px;width:1872.40px;height:1.00px;background:#d4d4d4;"></div>
<div style="left:26.00px;top:522.00px;width:1872.40px;height:1.00px;background:#d4d4d4;"></div>
<div style="left:26.00px;top:542.00px;width:1872.40px;height:1.00px;background:#d4d4d4;"></div>
<div style="left:26.00px;top:562.00px;width:1872.40px;height:1.00px;background:#d4d4d4;"></div>
<div style="left:26.00px;top:582.00px;width:1872.40px;height:1.00px;background:#d4d4d4;"></div>
<div style="left:26.00px;top:602.00px;width:1872.40px;height:1.00px;background:#d4d4d4;"></div>
<div style="left:26.00px;top:622.00px;width:1872.40px;height:1.00px;background:#d4d4d4;"></div>
<div style="left:26.00px;top:642.00px;width:1872.40px;height:1.00px;background:#d4d4d4;"></div>
<div style="left:26.00px;top:662.00px;width:1872.40px;height:1.00px;background:#d4d4d4;"></div>
<div style="left:26.00px;top:682.00px;width:1872.40px;height:1.00px;background:#d4d4d4;"></div>
<div style="left:26.00px;top:702.00px;width:1872.40px;height:1.00px;background:#d4d4d4;"></div>
<div style="left:26.00px;top:722.00px;width:1872.40px;height:1.00px;background:#d4d4d4;"></div>
<div style="left:26.00px;top:742.00px;width:1872.40px;height:1.00px;background:#d4d4d4;"></div>
<div style="left:26.00px;top:762.00px;width:1872.40px;height:1.00px;background:#d4d4d4;"></div>
<div style="left:26.00px;top:782.00px;width:1872.40px;height:1.00px;background:#d4d4d4;"></div>
<div style="left:26.00px;top:802.00px;width:1872.40px;height:1.00px;background:#d4d4d4;"></div>
<div style="left:26.00px;top:822.00px;width:1872.40px;height:1.00px;background:#d4d4d4;"></div>
<div style="left:26.00px;top:842.00px;width:1872.40px;height:1.00px;background:#d4d4d4;"></div>
<div style="left:26.00px;top:862.00px;width:1872.40px;height:1.00px;background:#d4d4d4;"></div>
<div style="left:26.00px;top:882.00px;width:1872.40px;height:1.00px;background:#d4d4d4;"></div>
<div style="left:26.00px;top:902.00px;width:1872.40px;height:1.00px;background:#d4d4d4;"></div>
<div style="left:26.00px;top:922.00px;width:1872.40px;height:1.00px;background:#d4d4d4;"></div>
<div style="left:26.00px;top:942.00px;width:1872.40px;height:1.00px;background:#d4d4d4;"></div>
<div style="left:26.00px;top:962.00px;width:1872.40px;height:1.00px;background:#d4d4d4;"></div>
<div style="left:26.00px;top:982.00px;width:1872.40px;height:1.00px;background:#d4d4d4;"></div>
<div style="left:89.00px;top:223.00px;width:1.00px;height:767.00px;background:#d4d4d4;"></div>
<div style="left:326.00px;top:223.00px;width:1.00px;height:767.00px;background:#d4d4d4;"></div>
<div style="left:475.00px;top:223.00px;width:1.00px;height:767.00px;background:#d4d4d4;"></div>
<div style="left:584.00px;top:223.00px;width:1.00px;height:767.00px;background:#d4d4d4;"></div>
<div style="left:671.00px;top:223.00px;width:1.00px;height:767.00px;background:#d4d4d4;"></div>
<div style="left:756.00px;top:223.00px;width:1.00px;height:767.00px;background:#d4d4d4;"></div>
<div style="left:820.00px;top:223.00px;width:1.00px;height:767.00px;background:#d4d4d4;"></div>
<div style="left:884.00px;top:223.00px;width:1.00px;height:767.00px;background:#d4d4d4;"></div>
<div style="left:948.00px;top:223.00px;width:1.00px;height:767.00px;background:#d4d4d4;"></div>
<div style="left:1012.00px;top:223.00px;width:1.00px;height:767.00px;background:#d4d4d4;"></div>
<div style="left:1076.00px;top:223.00px;width:1.00px;height:767.00px;background:#d4d4d4;"></div>
<div style="left:1140.00px;top:223.00px;width:1.00px;height:767.00px;background:#d4d4d4;"></div>
<div style="left:1204.00px;top:223.00px;width:1.00px;height:767.00px;background:#d4d4d4;"></div>
<div style="left:1268.00px;top:223.00px;width:1.00px;height:767.00px;background:#d4d4d4;"></div>
<div style="left:1332.00px;top:223.00px;width:1.00px;height:767.00px;background:#d4d4d4;"></div>
<div style="left:1396.00px;top:223.00px;width:1.00px;height:767.00px;background:#d4d4d4;"></div>
<div style="left:1460.00px;top:223.00px;width:1.00px;height:767.00px;background:#d4d4d4;"></div>
<div style="left:1524.00px;top:223.00px;width:1.00px;height:767.00px;background:#d4d4d4;"></div>
<div style="left:1588.00px;top:223.00px;width:1.00px;height:767.00px;background:#d4d4d4;"></div>
<div style="left:1652.00px;top:223.00px;width:1.00px;height:767.00px;background:#d4d4d4;"></div>
<div style="left:1716.00px;top:223.00px;width:1.00px;height:767.00px;background:#d4d4d4;"></div>
<div style="left:1780.00px;top:223.00px;width:1.00px;height:767.00px;background:#d4d4d4;"></div>
<div style="left:1844.00px;top:223.00px;width:1.00px;height:767.00px;background:#d4d4d4;"></div>
<div style="left:1897.40px;top:223.00px;width:1.00px;height:767.00px;background:#d4d4d4;"></div>
<div style="left:90.00px;top:302.00px;width:666.00px;height:688.00px;background:#fff;"></div>
<div style="left:90.00px;top:223.00px;width:385.00px;height:40.00px;background:#ddebf7;border-bottom:1px solid #9bc2e6;"></div>
<div style="left:90.00px;top:283.00px;width:666.00px;height:20.00px;background:#ddebf7;border-bottom:1px solid #9bc2e6;"></div>
<div style="left:90.00px;top:322.00px;width:666.00px;height:1.00px;background:#9bc2e6;"></div>
<div style="left:90.00px;top:942.00px;width:666.00px;height:1.00px;background:#9bc2e6;"></div>
<div style="left:0.00px;top:201.60px;width:1920.00px;height:21.40px;background:#e6e6e6;"></div>
<div style="left:0.00px;top:223.00px;width:26.00px;height:767.00px;background:#e6e6e6;"></div>
<div style="left:672.60px;top:202.80px;width:84.60px;height:20.20px;background:#d2d2d2;"></div>
<div style="left:0.00px;top:343.00px;width:26.00px;height:20.00px;background:#d2d2d2;"></div>
<div style="left:0.00px;top:222.00px;width:1898.40px;height:1.00px;background:#a6a6a6;"></div>
<div style="left:25.40px;top:203.60px;width:1.00px;height:786.40px;background:#a6a6a6;"></div>
<div style="left:672.60px;top:221.00px;width:84.60px;height:2.00px;background:#217346;"></div>
<div style="left:23.00px;top:343.00px;width:2.00px;height:20.00px;background:#217346;"></div>
<svg style="left:10px;top:207px;width:12px;height:12px" viewBox="0 0 12 12"><path d="M11.5 .5V11.5H.5Z" fill="#b4b4b4"/></svg>
<div style="left:89.00px;top:204.60px;width:1.00px;height:18.40px;background:#c4c4c4;"></div>
<span style="left:28.00px;top:206.20px;width:60px;text-align:center;font-size:13px;line-height:1;color:#444">A</span>
<div style="left:326.00px;top:204.60px;width:1.00px;height:18.40px;background:#c4c4c4;"></div>
<span style="left:178.50px;top:206.20px;width:60px;text-align:center;font-size:13px;line-height:1;color:#444">B</span>
<div style="left:475.00px;top:204.60px;width:1.00px;height:18.40px;background:#c4c4c4;"></div>
<span style="left:371.50px;top:206.20px;width:60px;text-align:center;font-size:13px;line-height:1;color:#444">C</span>
<div style="left:584.00px;top:204.60px;width:1.00px;height:18.40px;background:#c4c4c4;"></div>
<span style="left:500.50px;top:206.20px;width:60px;text-align:center;font-size:13px;line-height:1;color:#444">D</span>
<div style="left:671.00px;top:204.60px;width:1.00px;height:18.40px;background:#c4c4c4;"></div>
<span style="left:598.50px;top:206.20px;width:60px;text-align:center;font-size:13px;line-height:1;color:#444">E</span>
<div style="left:756.00px;top:204.60px;width:1.00px;height:18.40px;background:#c4c4c4;"></div>
<span style="left:684.50px;top:206.20px;width:60px;text-align:center;font-size:13px;line-height:1;color:#217346">F</span>
<div style="left:820.00px;top:204.60px;width:1.00px;height:18.40px;background:#c4c4c4;"></div>
<span style="left:759.00px;top:206.20px;width:60px;text-align:center;font-size:13px;line-height:1;color:#444">G</span>
<div style="left:884.00px;top:204.60px;width:1.00px;height:18.40px;background:#c4c4c4;"></div>
<span style="left:823.00px;top:206.20px;width:60px;text-align:center;font-size:13px;line-height:1;color:#444">H</span>
<div style="left:948.00px;top:204.60px;width:1.00px;height:18.40px;background:#c4c4c4;"></div>
<span style="left:887.00px;top:206.20px;width:60px;text-align:center;font-size:13px;line-height:1;color:#444">I</span>
<div style="left:1012.00px;top:204.60px;width:1.00px;height:18.40px;background:#c4c4c4;"></div>
<span style="left:951.00px;top:206.20px;width:60px;text-align:center;font-size:13px;line-height:1;color:#444">J</span>
<div style="left:1076.00px;top:204.60px;width:1.00px;height:18.40px;background:#c4c4c4;"></div>
<span style="left:1015.00px;top:206.20px;width:60px;text-align:center;font-size:13px;line-height:1;color:#444">K</span>
<div style="left:1140.00px;top:204.60px;width:1.00px;height:18.40px;background:#c4c4c4;"></div>
<span style="left:1079.00px;top:206.20px;width:60px;text-align:center;font-size:13px;line-height:1;color:#444">L</span>
<div style="left:1204.00px;top:204.60px;width:1.00px;height:18.40px;background:#c4c4c4;"></div>
<span style="left:1143.00px;top:206.20px;width:60px;text-align:center;font-size:13px;line-height:1;color:#444">M</span>
<div style="left:1268.00px;top:204.60px;width:1.00px;height:18.40px;background:#c4c4c4;"></div>
<span style="left:1207.00px;top:206.20px;width:60px;text-align:center;font-size:13px;line-height:1;color:#444">N</span>
<div style="left:1332.00px;top:204.60px;width:1.00px;height:18.40px;background:#c4c4c4;"></div>
<span style="left:1271.00px;top:206.20px;width:60px;text-align:center;font-size:13px;line-height:1;color:#444">O</span>
<div style="left:1396.00px;top:204.60px;width:1.00px;height:18.40px;background:#c4c4c4;"></div>
<span style="left:1335.00px;top:206.20px;width:60px;text-align:center;font-size:13px;line-height:1;color:#444">P</span>
<div style="left:1460.00px;top:204.60px;width:1.00px;height:18.40px;background:#c4c4c4;"></div>
<span style="left:1399.00px;top:206.20px;width:60px;text-align:center;font-size:13px;line-height:1;color:#444">Q</span>
<div style="left:1524.00px;top:204.60px;width:1.00px;height:18.40px;background:#c4c4c4;"></div>
<span style="left:1463.00px;top:206.20px;width:60px;text-align:center;font-size:13px;line-height:1;color:#444">R</span>
<div style="left:1588.00px;top:204.60px;width:1.00px;height:18.40px;background:#c4c4c4;"></div>
<span style="left:1527.00px;top:206.20px;width:60px;text-align:center;font-size:13px;line-height:1;color:#444">S</span>
<div style="left:1652.00px;top:204.60px;width:1.00px;height:18.40px;background:#c4c4c4;"></div>
<span style="left:1591.00px;top:206.20px;width:60px;text-align:center;font-size:13px;line-height:1;color:#444">T</span>
<div style="left:1716.00px;top:204.60px;width:1.00px;height:18.40px;background:#c4c4c4;"></div>
<span style="left:1655.00px;top:206.20px;width:60px;text-align:center;font-size:13px;line-height:1;color:#444">U</span>
<div style="left:1780.00px;top:204.60px;width:1.00px;height:18.40px;background:#c4c4c4;"></div>
<span style="left:1719.00px;top:206.20px;width:60px;text-align:center;font-size:13px;line-height:1;color:#444">V</span>
<div style="left:1844.00px;top:204.60px;width:1.00px;height:18.40px;background:#c4c4c4;"></div>
<span style="left:1783.00px;top:206.20px;width:60px;text-align:center;font-size:13px;line-height:1;color:#444">W</span>
<div style="left:1908.00px;top:204.60px;width:1.00px;height:18.40px;background:#c4c4c4;"></div>
<span style="left:1847.00px;top:206.20px;width:60px;text-align:center;font-size:13px;line-height:1;color:#444">X</span>
<div style="left:0.00px;top:242.00px;width:25.00px;height:1.00px;background:#c8c8c8;"></div>
<span style="left:0;top:227.20px;width:25px;text-align:center;font-size:13px;line-height:1;color:#444;letter-spacing:-.3px">1</span>
<div style="left:0.00px;top:262.00px;width:25.00px;height:1.00px;background:#c8c8c8;"></div>
<span style="left:0;top:247.20px;width:25px;text-align:center;font-size:13px;line-height:1;color:#444;letter-spacing:-.3px">2</span>
<div style="left:0.00px;top:282.00px;width:25.00px;height:1.00px;background:#c8c8c8;"></div>
<span style="left:0;top:267.20px;width:25px;text-align:center;font-size:13px;line-height:1;color:#444;letter-spacing:-.3px">3</span>
<div style="left:0.00px;top:302.00px;width:25.00px;height:1.00px;background:#c8c8c8;"></div>
<span style="left:0;top:287.20px;width:25px;text-align:center;font-size:13px;line-height:1;color:#444;letter-spacing:-.3px">4</span>
<div style="left:0.00px;top:322.00px;width:25.00px;height:1.00px;background:#c8c8c8;"></div>
<span style="left:0;top:307.20px;width:25px;text-align:center;font-size:13px;line-height:1;color:#444;letter-spacing:-.3px">5</span>
<div style="left:0.00px;top:342.00px;width:25.00px;height:1.00px;background:#c8c8c8;"></div>
<span style="left:0;top:327.20px;width:25px;text-align:center;font-size:13px;line-height:1;color:#444;letter-spacing:-.3px">6</span>
<div style="left:0.00px;top:362.00px;width:25.00px;height:1.00px;background:#c8c8c8;"></div>
<span style="left:0;top:347.20px;width:25px;text-align:center;font-size:13px;line-height:1;color:#217346;letter-spacing:-.3px">7</span>
<div style="left:0.00px;top:382.00px;width:25.00px;height:1.00px;background:#c8c8c8;"></div>
<span style="left:0;top:367.20px;width:25px;text-align:center;font-size:13px;line-height:1;color:#444;letter-spacing:-.3px">8</span>
<div style="left:0.00px;top:402.00px;width:25.00px;height:1.00px;background:#c8c8c8;"></div>
<span style="left:0;top:387.20px;width:25px;text-align:center;font-size:13px;line-height:1;color:#444;letter-spacing:-.3px">9</span>
<div style="left:0.00px;top:422.00px;width:25.00px;height:1.00px;background:#c8c8c8;"></div>
<span style="left:0;top:407.20px;width:25px;text-align:center;font-size:13px;line-height:1;color:#444;letter-spacing:-.3px">10</span>
<div style="left:0.00px;top:442.00px;width:25.00px;height:1.00px;background:#c8c8c8;"></div>
<span style="left:0;top:427.20px;width:25px;text-align:center;font-size:13px;line-height:1;color:#444;letter-spacing:-.3px">11</span>
<div style="left:0.00px;top:462.00px;width:25.00px;height:1.00px;background:#c8c8c8;"></div>
<span style="left:0;top:447.20px;width:25px;text-align:center;font-size:13px;line-height:1;color:#444;letter-spacing:-.3px">12</span>
<div style="left:0.00px;top:482.00px;width:25.00px;height:1.00px;background:#c8c8c8;"></div>
<span style="left:0;top:467.20px;width:25px;text-align:center;font-size:13px;line-height:1;color:#444;letter-spacing:-.3px">13</span>
<div style="left:0.00px;top:502.00px;width:25.00px;height:1.00px;background:#c8c8c8;"></div>
<span style="left:0;top:487.20px;width:25px;text-align:center;font-size:13px;line-height:1;color:#444;letter-spacing:-.3px">14</span>
<div style="left:0.00px;top:522.00px;width:25.00px;height:1.00px;background:#c8c8c8;"></div>
<span style="left:0;top:507.20px;width:25px;text-align:center;font-size:13px;line-height:1;color:#444;letter-spacing:-.3px">15</span>
<div style="left:0.00px;top:542.00px;width:25.00px;height:1.00px;background:#c8c8c8;"></div>
<span style="left:0;top:527.20px;width:25px;text-align:center;font-size:13px;line-height:1;color:#444;letter-spacing:-.3px">16</span>
<div style="left:0.00px;top:562.00px;width:25.00px;height:1.00px;background:#c8c8c8;"></div>
<span style="left:0;top:547.20px;width:25px;text-align:center;font-size:13px;line-height:1;color:#444;letter-spacing:-.3px">17</span>
<div style="left:0.00px;top:582.00px;width:25.00px;height:1.00px;background:#c8c8c8;"></div>
<span style="left:0;top:567.20px;width:25px;text-align:center;font-size:13px;line-height:1;color:#444;letter-spacing:-.3px">18</span>
<div style="left:0.00px;top:602.00px;width:25.00px;height:1.00px;background:#c8c8c8;"></div>
<span style="left:0;top:587.20px;width:25px;text-align:center;font-size:13px;line-height:1;color:#444;letter-spacing:-.3px">19</span>
<div style="left:0.00px;top:622.00px;width:25.00px;height:1.00px;background:#c8c8c8;"></div>
<span style="left:0;top:607.20px;width:25px;text-align:center;font-size:13px;line-height:1;color:#444;letter-spacing:-.3px">20</span>
<div style="left:0.00px;top:642.00px;width:25.00px;height:1.00px;background:#c8c8c8;"></div>
<span style="left:0;top:627.20px;width:25px;text-align:center;font-size:13px;line-height:1;color:#444;letter-spacing:-.3px">21</span>
<div style="left:0.00px;top:662.00px;width:25.00px;height:1.00px;background:#c8c8c8;"></div>
<span style="left:0;top:647.20px;width:25px;text-align:center;font-size:13px;line-height:1;color:#444;letter-spacing:-.3px">22</span>
<div style="left:0.00px;top:682.00px;width:25.00px;height:1.00px;background:#c8c8c8;"></div>
<span style="left:0;top:667.20px;width:25px;text-align:center;font-size:13px;line-height:1;color:#444;letter-spacing:-.3px">23</span>
<div style="left:0.00px;top:702.00px;width:25.00px;height:1.00px;background:#c8c8c8;"></div>
<span style="left:0;top:687.20px;width:25px;text-align:center;font-size:13px;line-height:1;color:#444;letter-spacing:-.3px">24</span>
<div style="left:0.00px;top:722.00px;width:25.00px;height:1.00px;background:#c8c8c8;"></div>
<span style="left:0;top:707.20px;width:25px;text-align:center;font-size:13px;line-height:1;color:#444;letter-spacing:-.3px">25</span>
<div style="left:0.00px;top:742.00px;width:25.00px;height:1.00px;background:#c8c8c8;"></div>
<span style="left:0;top:727.20px;width:25px;text-align:center;font-size:13px;line-height:1;color:#444;letter-spacing:-.3px">26</span>
<div style="left:0.00px;top:762.00px;width:25.00px;height:1.00px;background:#c8c8c8;"></div>
<span style="left:0;top:747.20px;width:25px;text-align:center;font-size:13px;line-height:1;color:#444;letter-spacing:-.3px">27</span>
<div style="left:0.00px;top:782.00px;width:25.00px;height:1.00px;background:#c8c8c8;"></div>
<span style="left:0;top:767.20px;width:25px;text-align:center;font-size:13px;line-height:1;color:#444;letter-spacing:-.3px">28</span>
<div style="left:0.00px;top:802.00px;width:25.00px;height:1.00px;background:#c8c8c8;"></div>
<span style="left:0;top:787.20px;width:25px;text-align:center;font-size:13px;line-height:1;color:#444;letter-spacing:-.3px">29</span>
<div style="left:0.00px;top:822.00px;width:25.00px;height:1.00px;background:#c8c8c8;"></div>
<span style="left:0;top:807.20px;width:25px;text-align:center;font-size:13px;line-height:1;color:#444;letter-spacing:-.3px">30</span>
<div style="left:0.00px;top:842.00px;width:25.00px;height:1.00px;background:#c8c8c8;"></div>
<span style="left:0;top:827.20px;width:25px;text-align:center;font-size:13px;line-height:1;color:#444;letter-spacing:-.3px">31</span>
<div style="left:0.00px;top:862.00px;width:25.00px;height:1.00px;background:#c8c8c8;"></div>
<span style="left:0;top:847.20px;width:25px;text-align:center;font-size:13px;line-height:1;color:#444;letter-spacing:-.3px">32</span>
<div style="left:0.00px;top:882.00px;width:25.00px;height:1.00px;background:#c8c8c8;"></div>
<span style="left:0;top:867.20px;width:25px;text-align:center;font-size:13px;line-height:1;color:#444;letter-spacing:-.3px">33</span>
<div style="left:0.00px;top:902.00px;width:25.00px;height:1.00px;background:#c8c8c8;"></div>
<span style="left:0;top:887.20px;width:25px;text-align:center;font-size:13px;line-height:1;color:#444;letter-spacing:-.3px">34</span>
<div style="left:0.00px;top:922.00px;width:25.00px;height:1.00px;background:#c8c8c8;"></div>
<span style="left:0;top:907.20px;width:25px;text-align:center;font-size:13px;line-height:1;color:#444;letter-spacing:-.3px">35</span>
<div style="left:0.00px;top:942.00px;width:25.00px;height:1.00px;background:#c8c8c8;"></div>
<span style="left:0;top:927.20px;width:25px;text-align:center;font-size:13px;line-height:1;color:#444;letter-spacing:-.3px">36</span>
<div style="left:0.00px;top:962.00px;width:25.00px;height:1.00px;background:#c8c8c8;"></div>
<span style="left:0;top:947.20px;width:25px;text-align:center;font-size:13px;line-height:1;color:#444;letter-spacing:-.3px">37</span>
<div style="left:0.00px;top:982.00px;width:25.00px;height:1.00px;background:#c8c8c8;"></div>
<span style="left:0;top:967.20px;width:25px;text-align:center;font-size:13px;line-height:1;color:#444;letter-spacing:-.3px">38</span>
<span style="left:0;top:987.20px;width:25px;text-align:center;font-size:13px;line-height:1;color:#444;letter-spacing:-.3px">39</span>
<span style="top:226.90px;font-size:13px;line-height:1;color:#000;letter-spacing:-0.067px;left:92.00px;">Year</span>
<span style="top:246.90px;font-size:13px;line-height:1;color:#000;letter-spacing:0.497px;left:92.00px;">Country</span>
<span style="top:226.90px;font-size:13px;line-height:1;color:#000;letter-spacing:-0.230px;left:330.30px;">2016</span>
<span style="top:246.90px;font-size:13px;line-height:1;color:#000;letter-spacing:0.380px;left:330.00px;">Australia</span>
<span style="top:286.90px;font-size:13px;line-height:1;color:#000;letter-spacing:-0.424px;font-weight:bold;left:92.00px;">Row Labels</span>
<span style="top:286.90px;font-size:13px;line-height:1;color:#000;letter-spacing:-0.032px;font-weight:bold;left:330.00px;">Sum of Order Quantity</span>
<span style="top:286.90px;font-size:13px;line-height:1;color:#000;letter-spacing:-0.093px;font-weight:bold;left:478.00px;">Sum of Revenue</span>
<span style="top:286.90px;font-size:13px;line-height:1;color:#000;letter-spacing:-0.111px;font-weight:bold;left:587.20px;">Sum of Profit</span>
<span style="top:286.90px;font-size:13px;line-height:1;color:#000;letter-spacing:-0.126px;font-weight:bold;left:675.80px;">Margins</span>
<div style="left:457.80px;top:224.60px;width:16.40px;height:16.40px;background:#fcfcfc;border:1px solid #b4b4b4;"></div>
<svg style="left:459px;top:226.00px;width:14px;height:14px" viewBox="0 0 14 14"><path d="M5.2 2.6H12.6L9.8 5.8V10.6H8V5.8Z" fill="#555"/><path d="M1.6 8.4H5.2L3.4 10.4Z" fill="#555"/></svg>
<div style="left:457.80px;top:244.60px;width:16.40px;height:16.40px;background:#fcfcfc;border:1px solid #b4b4b4;"></div>
<svg style="left:459px;top:246.00px;width:14px;height:14px" viewBox="0 0 14 14"><path d="M5.2 2.6H12.6L9.8 5.8V10.6H8V5.8Z" fill="#555"/><path d="M1.6 8.4H5.2L3.4 10.4Z" fill="#555"/></svg>
<div style="left:309.60px;top:284.60px;width:16.40px;height:16.40px;background:#fcfcfc;border:1px solid #b4b4b4;"></div>
<svg style="left:313.5px;top:290.00px;width:9px;height:6px" viewBox="0 0 9 6"><path d="M.5 .8H8.5L4.5 5Z" fill="#555"/></svg>
<div style="left:329.00px;top:304.50px;width:115.20px;height:15.00px;background:#638ec6;"></div>
<div style="left:477.10px;top:304.50px;width:21.61px;height:15.00px;background:#63be7b;"></div>
<div style="left:586.10px;top:304.50px;width:28.49px;height:15.00px;background:#ffb628;"></div>
<svg style="left:94.20px;top:307.60px;width:9px;height:9px" viewBox="0 0 9 9"><rect x=".5" y=".5" width="8" height="8" rx="1.2" fill="#eef1f6" stroke="#a3adbb" stroke-width="1"/><path d="M2.3 4.5H6.7" stroke="#3c4a66" stroke-width="1.2"/></svg>
<span style="top:306.90px;font-size:13px;line-height:1;color:#000;letter-spacing:-0.601px;font-weight:bold;left:105.00px;">Accessories</span>
<span style="top:306.90px;font-size:13px;line-height:1;color:#000;letter-spacing:-0.230px;font-weight:bold;left:438.20px;">56462</span>
<span style="top:306.90px;font-size:13px;line-height:1;color:#000;letter-spacing:-0.230px;font-weight:bold;left:540.00px;">745100</span>
<span style="top:306.90px;font-size:13px;line-height:1;color:#000;letter-spacing:-0.110px;font-weight:bold;left:627.60px;">411877</span>
<span style="top:306.90px;font-size:13px;line-height:1;color:#000;letter-spacing:-0.174px;font-weight:bold;left:679.60px;">0.552780835</span>
<div style="left:477.10px;top:324.50px;width:1.20px;height:15.00px;background:#63be7b;opacity:0.48;"></div>
<div style="left:586.10px;top:324.50px;width:1.20px;height:15.00px;background:#ffb628;opacity:0.63;"></div>
<svg style="left:107.40px;top:327.60px;width:9px;height:9px" viewBox="0 0 9 9"><rect x=".5" y=".5" width="8" height="8" rx="1.2" fill="#eef1f6" stroke="#a3adbb" stroke-width="1"/><path d="M2.3 4.5H6.7" stroke="#3c4a66" stroke-width="1.2"/></svg>
<span style="top:326.90px;font-size:13px;line-height:1;color:#000;letter-spacing:-0.638px;font-weight:bold;left:118.00px;">Bike Racks</span>
<span style="top:326.90px;font-size:13px;line-height:1;color:#000;letter-spacing:-0.230px;font-weight:bold;left:452.20px;">221</span>
<span style="top:326.90px;font-size:13px;line-height:1;color:#000;letter-spacing:-0.230px;font-weight:bold;left:547.00px;">22015</span>
<span style="top:326.90px;font-size:13px;line-height:1;color:#000;letter-spacing:-0.230px;font-weight:bold;left:634.60px;">12070</span>
<span style="top:326.90px;font-size:13px;line-height:1;color:#000;letter-spacing:-0.174px;font-weight:bold;left:679.60px;">0.548262548</span>
<div style="left:477.10px;top:344.50px;width:1.20px;height:15.00px;background:#63be7b;opacity:0.48;"></div>
<div style="left:586.10px;top:344.50px;width:1.20px;height:15.00px;background:#ffb628;opacity:0.63;"></div>
<span style="top:346.90px;font-size:13px;line-height:1;color:#000;letter-spacing:0.039px;left:131.20px;">Hitch Rack - 4-Bike</span>
<span style="top:346.90px;font-size:13px;line-height:1;color:#000;letter-spacing:-0.230px;left:452.20px;">221</span>
<span style="top:346.90px;font-size:13px;line-height:1;color:#000;letter-spacing:-0.230px;left:547.00px;">22015</span>
<span style="top:346.90px;font-size:13px;line-height:1;color:#000;letter-spacing:-0.230px;left:634.60px;">12070</span>
<span style="top:346.90px;font-size:13px;line-height:1;color:#000;letter-spacing:-0.174px;left:679.60px;">0.548262548</span>
<div style="left:477.10px;top:364.50px;width:1.20px;height:15.00px;background:#63be7b;opacity:0.42;"></div>
<div style="left:586.10px;top:364.50px;width:1.20px;height:15.00px;background:#ffb628;opacity:0.56;"></div>
<svg style="left:107.40px;top:367.60px;width:9px;height:9px" viewBox="0 0 9 9"><rect x=".5" y=".5" width="8" height="8" rx="1.2" fill="#eef1f6" stroke="#a3adbb" stroke-width="1"/><path d="M2.3 4.5H6.7" stroke="#3c4a66" stroke-width="1.2"/></svg>
<span style="top:366.90px;font-size:13px;line-height:1;color:#000;letter-spacing:-0.401px;font-weight:bold;left:118.00px;">Bike Stands</span>
<span style="top:366.90px;font-size:13px;line-height:1;color:#000;letter-spacing:-0.230px;font-weight:bold;left:452.20px;">144</span>
<span style="top:366.90px;font-size:13px;line-height:1;color:#000;letter-spacing:-0.230px;font-weight:bold;left:547.00px;">19326</span>
<span style="top:366.90px;font-size:13px;line-height:1;color:#000;letter-spacing:-0.230px;font-weight:bold;left:634.60px;">10830</span>
<span style="top:366.90px;font-size:13px;line-height:1;color:#000;letter-spacing:-0.174px;font-weight:bold;left:679.60px;">0.560384974</span>
<div style="left:477.10px;top:384.50px;width:1.20px;height:15.00px;background:#63be7b;opacity:0.42;"></div>
<div style="left:586.10px;top:384.50px;width:1.20px;height:15.00px;background:#ffb628;opacity:0.56;"></div>
<span style="top:386.90px;font-size:13px;line-height:1;color:#000;letter-spacing:0.196px;left:131.20px;">All-Purpose Bike Stand</span>
<span style="top:386.90px;font-size:13px;line-height:1;color:#000;letter-spacing:-0.230px;left:452.20px;">144</span>
<span style="top:386.90px;font-size:13px;line-height:1;color:#000;letter-spacing:-0.230px;left:547.00px;">19326</span>
<span style="top:386.90px;font-size:13px;line-height:1;color:#000;letter-spacing:-0.230px;left:634.60px;">10830</span>
<span style="top:386.90px;font-size:13px;line-height:1;color:#000;letter-spacing:-0.174px;left:679.60px;">0.560384974</span>
<div style="left:329.00px;top:404.50px;width:28.64px;height:15.00px;background:#638ec6;"></div>
<div style="left:477.10px;top:404.50px;width:2.18px;height:15.00px;background:#63be7b;"></div>
<div style="left:586.10px;top:404.50px;width:2.85px;height:15.00px;background:#ffb628;"></div>
<svg style="left:107.40px;top:407.60px;width:9px;height:9px" viewBox="0 0 9 9"><rect x=".5" y=".5" width="8" height="8" rx="1.2" fill="#eef1f6" stroke="#a3adbb" stroke-width="1"/><path d="M2.3 4.5H6.7" stroke="#3c4a66" stroke-width="1.2"/></svg>
<span style="top:406.90px;font-size:13px;line-height:1;color:#000;letter-spacing:-0.377px;font-weight:bold;left:118.00px;">Bottles and Cages</span>
<span style="top:406.90px;font-size:13px;line-height:1;color:#000;letter-spacing:-0.230px;font-weight:bold;left:438.20px;">14038</span>
<span style="top:406.90px;font-size:13px;line-height:1;color:#000;letter-spacing:-0.230px;font-weight:bold;left:547.00px;">75314</span>
<span style="top:406.90px;font-size:13px;line-height:1;color:#000;letter-spacing:-0.230px;font-weight:bold;left:634.60px;">41265</span>
<span style="top:406.90px;font-size:13px;line-height:1;color:#000;letter-spacing:-0.161px;font-weight:bold;left:693.60px;">0.5479061</span>
<div style="left:329.00px;top:424.50px;width:2.79px;height:15.00px;background:#638ec6;"></div>
<span style="top:426.90px;font-size:13px;line-height:1;color:#000;letter-spacing:0.399px;left:131.20px;">Mountain Bottle Cage</span>
<span style="top:426.90px;font-size:13px;line-height:1;color:#000;letter-spacing:-0.230px;left:445.20px;">1368</span>
<span style="top:426.90px;font-size:13px;line-height:1;color:#000;letter-spacing:-0.037px;left:547.00px;">11253</span>
<span style="top:426.90px;font-size:13px;line-height:1;color:#000;letter-spacing:-0.230px;left:641.60px;">5781</span>
<span style="top:426.90px;font-size:13px;line-height:1;color:#000;letter-spacing:-0.174px;left:679.60px;">0.513729672</span>
<div style="left:329.00px;top:444.50px;width:6.60px;height:15.00px;background:#638ec6;"></div>
<div style="left:477.10px;top:444.50px;width:1.20px;height:15.00px;background:#63be7b;opacity:0.52;"></div>
<div style="left:586.10px;top:444.50px;width:1.20px;height:15.00px;background:#ffb628;opacity:0.75;"></div>
<span style="top:446.90px;font-size:13px;line-height:1;color:#000;letter-spacing:0.024px;left:131.20px;">Road Bottle Cage</span>
<span style="top:446.90px;font-size:13px;line-height:1;color:#000;letter-spacing:-0.230px;left:445.20px;">3237</span>
<span style="top:446.90px;font-size:13px;line-height:1;color:#000;letter-spacing:-0.037px;left:547.00px;">24110</span>
<span style="top:446.90px;font-size:13px;line-height:1;color:#000;letter-spacing:-0.230px;left:634.60px;">14399</span>
<span style="top:446.90px;font-size:13px;line-height:1;color:#000;letter-spacing:-0.168px;left:686.60px;">0.59722107</span>
<div style="left:329.00px;top:464.50px;width:19.25px;height:15.00px;background:#638ec6;"></div>
<div style="left:477.10px;top:464.50px;width:1.20px;height:15.00px;background:#63be7b;opacity:0.87;"></div>
<div style="left:586.10px;top:464.50px;width:1.46px;height:15.00px;background:#ffb628;"></div>
<span style="top:466.90px;font-size:13px;line-height:1;color:#000;letter-spacing:0.238px;left:131.20px;">Water Bottle - 30 oz.</span>
<span style="top:466.90px;font-size:13px;line-height:1;color:#000;letter-spacing:-0.230px;left:445.20px;">9433</span>
<span style="top:466.90px;font-size:13px;line-height:1;color:#000;letter-spacing:-0.230px;left:547.00px;">39951</span>
<span style="top:466.90px;font-size:13px;line-height:1;color:#000;letter-spacing:-0.230px;left:634.60px;">21085</span>
<span style="top:466.90px;font-size:13px;line-height:1;color:#000;letter-spacing:-0.168px;left:686.60px;">0.52777152</span>
<div style="left:329.00px;top:484.50px;width:4.19px;height:15.00px;background:#638ec6;"></div>
<div style="left:586.10px;top:484.50px;width:1.20px;height:15.00px;background:#ffb628;opacity:0.40;"></div>
<svg style="left:107.40px;top:487.60px;width:9px;height:9px" viewBox="0 0 9 9"><rect x=".5" y=".5" width="8" height="8" rx="1.2" fill="#eef1f6" stroke="#a3adbb" stroke-width="1"/><path d="M2.3 4.5H6.7" stroke="#3c4a66" stroke-width="1.2"/></svg>
<span style="top:486.90px;font-size:13px;line-height:1;color:#000;letter-spacing:-0.365px;font-weight:bold;left:118.00px;">Cleaners</span>
<span style="top:486.90px;font-size:13px;line-height:1;color:#000;letter-spacing:-0.230px;font-weight:bold;left:445.20px;">2052</span>
<span style="top:486.90px;font-size:13px;line-height:1;color:#000;letter-spacing:-0.230px;font-weight:bold;left:547.00px;">13802</span>
<span style="top:486.90px;font-size:13px;line-height:1;color:#000;letter-spacing:-0.230px;font-weight:bold;left:641.60px;">7646</span>
<span style="top:486.90px;font-size:13px;line-height:1;color:#000;letter-spacing:-0.174px;font-weight:bold;left:679.60px;">0.553977684</span>
<div style="left:329.00px;top:504.50px;width:4.19px;height:15.00px;background:#638ec6;"></div>
<div style="left:586.10px;top:504.50px;width:1.20px;height:15.00px;background:#ffb628;opacity:0.40;"></div>
<span style="top:506.90px;font-size:13px;line-height:1;color:#000;letter-spacing:0.159px;left:131.20px;">Bike Wash - Dissolver</span>
<span style="top:506.90px;font-size:13px;line-height:1;color:#000;letter-spacing:-0.230px;left:445.20px;">2052</span>
<span style="top:506.90px;font-size:13px;line-height:1;color:#000;letter-spacing:-0.230px;left:547.00px;">13802</span>
<span style="top:506.90px;font-size:13px;line-height:1;color:#000;letter-spacing:-0.230px;left:641.60px;">7646</span>
<span style="top:506.90px;font-size:13px;line-height:1;color:#000;letter-spacing:-0.174px;left:679.60px;">0.553977684</span>
<div style="left:329.00px;top:524.50px;width:5.15px;height:15.00px;background:#638ec6;"></div>
<div style="left:477.10px;top:524.50px;width:1.34px;height:15.00px;background:#63be7b;"></div>
<div style="left:586.10px;top:524.50px;width:1.81px;height:15.00px;background:#ffb628;"></div>
<svg style="left:107.40px;top:527.60px;width:9px;height:9px" viewBox="0 0 9 9"><rect x=".5" y=".5" width="8" height="8" rx="1.2" fill="#eef1f6" stroke="#a3adbb" stroke-width="1"/><path d="M2.3 4.5H6.7" stroke="#3c4a66" stroke-width="1.2"/></svg>
<span style="top:526.90px;font-size:13px;line-height:1;color:#000;letter-spacing:-0.367px;font-weight:bold;left:118.00px;">Fenders</span>
<span style="top:526.90px;font-size:13px;line-height:1;color:#000;letter-spacing:-0.230px;font-weight:bold;left:445.20px;">2522</span>
<span style="top:526.90px;font-size:13px;line-height:1;color:#000;letter-spacing:-0.230px;font-weight:bold;left:547.00px;">46352</span>
<span style="top:526.90px;font-size:13px;line-height:1;color:#000;letter-spacing:-0.230px;font-weight:bold;left:634.60px;">26176</span>
<span style="top:526.90px;font-size:13px;line-height:1;color:#000;letter-spacing:-0.174px;font-weight:bold;left:679.60px;">0.564722126</span>
<div style="left:329.00px;top:544.50px;width:5.15px;height:15.00px;background:#638ec6;"></div>
<div style="left:477.10px;top:544.50px;width:1.34px;height:15.00px;background:#63be7b;"></div>
<div style="left:586.10px;top:544.50px;width:1.81px;height:15.00px;background:#ffb628;"></div>
<span style="top:546.90px;font-size:13px;line-height:1;color:#000;letter-spacing:0.317px;left:131.20px;">Fender Set - Mountain</span>
<span style="top:546.90px;font-size:13px;line-height:1;color:#000;letter-spacing:-0.230px;left:445.20px;">2522</span>
<span style="top:546.90px;font-size:13px;line-height:1;color:#000;letter-spacing:-0.230px;left:547.00px;">46352</span>
<span style="top:546.90px;font-size:13px;line-height:1;color:#000;letter-spacing:-0.230px;left:634.60px;">26176</span>
<span style="top:546.90px;font-size:13px;line-height:1;color:#000;letter-spacing:-0.174px;left:679.60px;">0.564722126</span>
<div style="left:329.00px;top:564.50px;width:19.30px;height:15.00px;background:#638ec6;"></div>
<div style="left:477.10px;top:564.50px;width:8.05px;height:15.00px;background:#63be7b;"></div>
<div style="left:586.10px;top:564.50px;width:10.69px;height:15.00px;background:#ffb628;"></div>
<svg style="left:107.40px;top:567.60px;width:9px;height:9px" viewBox="0 0 9 9"><rect x=".5" y=".5" width="8" height="8" rx="1.2" fill="#eef1f6" stroke="#a3adbb" stroke-width="1"/><path d="M2.3 4.5H6.7" stroke="#3c4a66" stroke-width="1.2"/></svg>
<span style="top:566.90px;font-size:13px;line-height:1;color:#000;letter-spacing:-0.083px;font-weight:bold;left:118.00px;">Helmets</span>
<span style="top:566.90px;font-size:13px;line-height:1;color:#000;letter-spacing:-0.230px;font-weight:bold;left:445.20px;">9460</span>
<span style="top:566.90px;font-size:13px;line-height:1;color:#000;letter-spacing:-0.230px;font-weight:bold;left:540.00px;">277482</span>
<span style="top:566.90px;font-size:13px;line-height:1;color:#000;letter-spacing:-0.230px;font-weight:bold;left:627.60px;">154502</span>
<span style="top:566.90px;font-size:13px;line-height:1;color:#000;letter-spacing:-0.174px;font-weight:bold;left:679.60px;">0.556800081</span>
<div style="left:329.00px;top:584.50px;width:7.25px;height:15.00px;background:#638ec6;"></div>
<div style="left:477.10px;top:584.50px;width:3.03px;height:15.00px;background:#63be7b;"></div>
<div style="left:586.10px;top:584.50px;width:4.04px;height:15.00px;background:#ffb628;"></div>
<span style="top:586.90px;font-size:13px;line-height:1;color:#000;letter-spacing:0.179px;left:131.20px;">Sport-100 Helmet, Black</span>
<span style="top:586.90px;font-size:13px;line-height:1;color:#000;letter-spacing:-0.230px;left:445.20px;">3553</span>
<span style="top:586.90px;font-size:13px;line-height:1;color:#000;letter-spacing:-0.230px;left:540.00px;">104558</span>
<span style="top:586.90px;font-size:13px;line-height:1;color:#000;letter-spacing:-0.230px;left:634.60px;">58369</span>
<span style="top:586.90px;font-size:13px;line-height:1;color:#000;letter-spacing:-0.174px;left:679.60px;">0.558245184</span>
<div style="left:329.00px;top:604.50px;width:5.79px;height:15.00px;background:#638ec6;"></div>
<div style="left:477.10px;top:604.50px;width:2.42px;height:15.00px;background:#63be7b;"></div>
<div style="left:586.10px;top:604.50px;width:3.23px;height:15.00px;background:#ffb628;"></div>
<span style="top:606.90px;font-size:13px;line-height:1;color:#000;letter-spacing:0.222px;left:131.20px;">Sport-100 Helmet, Blue</span>
<span style="top:606.90px;font-size:13px;line-height:1;color:#000;letter-spacing:-0.230px;left:445.20px;">2838</span>
<span style="top:606.90px;font-size:13px;line-height:1;color:#000;letter-spacing:-0.230px;left:547.00px;">83551</span>
<span style="top:606.90px;font-size:13px;line-height:1;color:#000;letter-spacing:-0.230px;left:634.60px;">46657</span>
<span style="top:606.90px;font-size:13px;line-height:1;color:#000;letter-spacing:-0.174px;left:679.60px;">0.558425393</span>
<div style="left:329.00px;top:624.50px;width:6.26px;height:15.00px;background:#638ec6;"></div>
<div style="left:477.10px;top:624.50px;width:2.59px;height:15.00px;background:#63be7b;"></div>
<div style="left:586.10px;top:624.50px;width:3.42px;height:15.00px;background:#ffb628;"></div>
<span style="top:626.90px;font-size:13px;line-height:1;color:#000;letter-spacing:0.145px;left:131.20px;">Sport-100 Helmet, Red</span>
<span style="top:626.90px;font-size:13px;line-height:1;color:#000;letter-spacing:-0.230px;left:445.20px;">3069</span>
<span style="top:626.90px;font-size:13px;line-height:1;color:#000;letter-spacing:-0.230px;left:547.00px;">89373</span>
<span style="top:626.90px;font-size:13px;line-height:1;color:#000;letter-spacing:-0.230px;left:634.60px;">49476</span>
<span style="top:626.90px;font-size:13px;line-height:1;color:#000;letter-spacing:-0.168px;left:686.60px;">0.55359001</span>
<div style="left:329.00px;top:644.50px;width:2.44px;height:15.00px;background:#638ec6;"></div>
<div style="left:477.10px;top:644.50px;width:1.60px;height:15.00px;background:#63be7b;"></div>
<div style="left:586.10px;top:644.50px;width:2.07px;height:15.00px;background:#ffb628;"></div>
<svg style="left:107.40px;top:647.60px;width:9px;height:9px" viewBox="0 0 9 9"><rect x=".5" y=".5" width="8" height="8" rx="1.2" fill="#eef1f6" stroke="#a3adbb" stroke-width="1"/><path d="M2.3 4.5H6.7" stroke="#3c4a66" stroke-width="1.2"/></svg>
<span style="top:646.90px;font-size:13px;line-height:1;color:#000;letter-spacing:-0.258px;font-weight:bold;left:118.00px;">Hydration Packs</span>
<span style="top:646.90px;font-size:13px;line-height:1;color:#000;letter-spacing:-0.051px;font-weight:bold;left:445.20px;">1196</span>
<span style="top:646.90px;font-size:13px;line-height:1;color:#000;letter-spacing:-0.230px;font-weight:bold;left:547.00px;">55097</span>
<span style="top:646.90px;font-size:13px;line-height:1;color:#000;letter-spacing:-0.230px;font-weight:bold;left:634.60px;">29981</span>
<span style="top:646.90px;font-size:13px;line-height:1;color:#000;letter-spacing:-0.174px;font-weight:bold;left:679.60px;">0.544149409</span>
<div style="left:329.00px;top:664.50px;width:2.44px;height:15.00px;background:#638ec6;"></div>
<div style="left:477.10px;top:664.50px;width:1.60px;height:15.00px;background:#63be7b;"></div>
<div style="left:586.10px;top:664.50px;width:2.07px;height:15.00px;background:#ffb628;"></div>
<span style="top:666.90px;font-size:13px;line-height:1;color:#000;letter-spacing:0.125px;left:131.20px;">Hydration Pack - 70 oz.</span>
<span style="top:666.90px;font-size:13px;line-height:1;color:#000;letter-spacing:0.011px;left:445.20px;">1196</span>
<span style="top:666.90px;font-size:13px;line-height:1;color:#000;letter-spacing:-0.230px;left:547.00px;">55097</span>
<span style="top:666.90px;font-size:13px;line-height:1;color:#000;letter-spacing:-0.230px;left:634.60px;">29981</span>
<span style="top:666.90px;font-size:13px;line-height:1;color:#000;letter-spacing:-0.174px;left:679.60px;">0.544149409</span>
<div style="left:329.00px;top:684.50px;width:54.74px;height:15.00px;background:#638ec6;"></div>
<div style="left:477.10px;top:684.50px;width:6.84px;height:15.00px;background:#63be7b;"></div>
<div style="left:586.10px;top:684.50px;width:8.95px;height:15.00px;background:#ffb628;"></div>
<svg style="left:107.40px;top:687.60px;width:9px;height:9px" viewBox="0 0 9 9"><rect x=".5" y=".5" width="8" height="8" rx="1.2" fill="#eef1f6" stroke="#a3adbb" stroke-width="1"/><path d="M2.3 4.5H6.7" stroke="#3c4a66" stroke-width="1.2"/></svg>
<span style="top:686.90px;font-size:13px;line-height:1;color:#000;letter-spacing:-0.299px;font-weight:bold;left:118.00px;">Tires and Tubes</span>
<span style="top:686.90px;font-size:13px;line-height:1;color:#000;letter-spacing:-0.230px;font-weight:bold;left:438.20px;">26829</span>
<span style="top:686.90px;font-size:13px;line-height:1;color:#000;letter-spacing:-0.230px;font-weight:bold;left:540.00px;">235712</span>
<span style="top:686.90px;font-size:13px;line-height:1;color:#000;letter-spacing:-0.230px;font-weight:bold;left:627.60px;">129407</span>
<span style="top:686.90px;font-size:13px;line-height:1;color:#000;letter-spacing:-0.174px;font-weight:bold;left:679.60px;">0.549004718</span>
<div style="left:329.00px;top:704.50px;width:2.55px;height:15.00px;background:#638ec6;"></div>
<div style="left:477.10px;top:704.50px;width:1.20px;height:15.00px;background:#63be7b;opacity:0.79;"></div>
<div style="left:586.10px;top:704.50px;width:1.39px;height:15.00px;background:#ffb628;"></div>
<span style="top:706.90px;font-size:13px;line-height:1;color:#000;letter-spacing:0.406px;left:131.20px;">HL Mountain Tire</span>
<span style="top:706.90px;font-size:13px;line-height:1;color:#000;letter-spacing:-0.230px;left:445.20px;">1251</span>
<span style="top:706.90px;font-size:13px;line-height:1;color:#000;letter-spacing:-0.230px;left:547.00px;">36305</span>
<span style="top:706.90px;font-size:13px;line-height:1;color:#000;letter-spacing:-0.230px;left:634.60px;">20042</span>
<span style="top:706.90px;font-size:13px;line-height:1;color:#000;letter-spacing:-0.174px;left:679.60px;">0.552045173</span>
<div style="left:329.00px;top:724.50px;width:1.78px;height:15.00px;background:#638ec6;"></div>
<div style="left:477.10px;top:724.50px;width:1.20px;height:15.00px;background:#63be7b;opacity:0.52;"></div>
<div style="left:586.10px;top:724.50px;width:1.20px;height:15.00px;background:#ffb628;opacity:0.71;"></div>
<span style="top:726.90px;font-size:13px;line-height:1;color:#000;letter-spacing:-0.092px;left:131.20px;">HL Road Tire</span>
<span style="top:726.90px;font-size:13px;line-height:1;color:#000;letter-spacing:-0.230px;left:452.20px;">872</span>
<span style="top:726.90px;font-size:13px;line-height:1;color:#000;letter-spacing:-0.230px;left:547.00px;">24068</span>
<span style="top:726.90px;font-size:13px;line-height:1;color:#000;letter-spacing:-0.230px;left:634.60px;">13604</span>
<span style="top:726.90px;font-size:13px;line-height:1;color:#000;letter-spacing:-0.174px;left:679.60px;">0.565231843</span>
<div style="left:329.00px;top:744.50px;width:1.74px;height:15.00px;background:#638ec6;"></div>
<div style="left:477.10px;top:744.50px;width:1.20px;height:15.00px;background:#63be7b;opacity:0.39;"></div>
<div style="left:586.10px;top:744.50px;width:1.20px;height:15.00px;background:#ffb628;opacity:0.52;"></div>
<span style="top:746.90px;font-size:13px;line-height:1;color:#000;letter-spacing:0.353px;left:131.20px;">LL Mountain Tire</span>
<span style="top:746.90px;font-size:13px;line-height:1;color:#000;letter-spacing:-0.230px;left:452.20px;">853</span>
<span style="top:746.90px;font-size:13px;line-height:1;color:#000;letter-spacing:-0.230px;left:547.00px;">17710</span>
<span style="top:746.90px;font-size:13px;line-height:1;color:#000;letter-spacing:-0.230px;left:634.60px;">10033</span>
<span style="top:746.90px;font-size:13px;line-height:1;color:#000;letter-spacing:-0.174px;left:679.60px;">0.566516093</span>
<div style="left:329.00px;top:764.50px;width:2.95px;height:15.00px;background:#638ec6;"></div>
<div style="left:477.10px;top:764.50px;width:1.20px;height:15.00px;background:#63be7b;opacity:0.53;"></div>
<div style="left:586.10px;top:764.50px;width:1.20px;height:15.00px;background:#ffb628;opacity:0.68;"></div>
<span style="top:766.90px;font-size:13px;line-height:1;color:#000;letter-spacing:-0.163px;left:131.20px;">LL Road Tire</span>
<span style="top:766.90px;font-size:13px;line-height:1;color:#000;letter-spacing:-0.230px;left:445.20px;">1445</span>
<span style="top:766.90px;font-size:13px;line-height:1;color:#000;letter-spacing:-0.230px;left:547.00px;">24580</span>
<span style="top:766.90px;font-size:13px;line-height:1;color:#000;letter-spacing:-0.230px;left:634.60px;">13020</span>
<span style="top:766.90px;font-size:13px;line-height:1;color:#000;letter-spacing:-0.174px;left:679.60px;">0.529698942</span>
<div style="left:329.00px;top:784.50px;width:2.44px;height:15.00px;background:#638ec6;"></div>
<div style="left:477.10px;top:784.50px;width:1.20px;height:15.00px;background:#63be7b;opacity:0.64;"></div>
<div style="left:586.10px;top:784.50px;width:1.20px;height:15.00px;background:#ffb628;opacity:0.84;"></div>
<span style="top:786.90px;font-size:13px;line-height:1;color:#000;letter-spacing:0.566px;left:131.20px;">ML Mountain Tire</span>
<span style="top:786.90px;font-size:13px;line-height:1;color:#000;letter-spacing:0.011px;left:445.20px;">1196</span>
<span style="top:786.90px;font-size:13px;line-height:1;color:#000;letter-spacing:-0.230px;left:547.00px;">29394</span>
<span style="top:786.90px;font-size:13px;line-height:1;color:#000;letter-spacing:-0.230px;left:634.60px;">16238</span>
<span style="top:786.90px;font-size:13px;line-height:1;color:#000;letter-spacing:-0.174px;left:679.60px;">0.552425665</span>
<div style="left:329.00px;top:804.50px;width:4.38px;height:15.00px;background:#638ec6;"></div>
<div style="left:477.10px;top:804.50px;width:1.30px;height:15.00px;background:#63be7b;"></div>
<div style="left:586.10px;top:804.50px;width:1.78px;height:15.00px;background:#ffb628;"></div>
<span style="top:806.90px;font-size:13px;line-height:1;color:#000;letter-spacing:0.121px;left:131.20px;">ML Road Tire</span>
<span style="top:806.90px;font-size:13px;line-height:1;color:#000;letter-spacing:-0.230px;left:445.20px;">2145</span>
<span style="top:806.90px;font-size:13px;line-height:1;color:#000;letter-spacing:-0.230px;left:547.00px;">44978</span>
<span style="top:806.90px;font-size:13px;line-height:1;color:#000;letter-spacing:-0.230px;left:634.60px;">25673</span>
<span style="top:806.90px;font-size:13px;line-height:1;color:#000;letter-spacing:-0.174px;left:679.60px;">0.570790164</span>
<div style="left:329.00px;top:824.50px;width:9.17px;height:15.00px;background:#638ec6;"></div>
<div style="left:477.10px;top:824.50px;width:1.20px;height:15.00px;background:#63be7b;opacity:0.41;"></div>
<div style="left:586.10px;top:824.50px;width:1.20px;height:15.00px;background:#ffb628;opacity:0.52;"></div>
<span style="top:826.90px;font-size:13px;line-height:1;color:#000;letter-spacing:0.484px;left:131.20px;">Mountain Tire Tube</span>
<span style="top:826.90px;font-size:13px;line-height:1;color:#000;letter-spacing:-0.230px;left:445.20px;">4493</span>
<span style="top:826.90px;font-size:13px;line-height:1;color:#000;letter-spacing:-0.230px;left:547.00px;">19063</span>
<span style="top:826.90px;font-size:13px;line-height:1;color:#000;letter-spacing:-0.230px;left:634.60px;">10077</span>
<span style="top:826.90px;font-size:13px;line-height:1;color:#000;letter-spacing:-0.174px;left:679.60px;">0.528615643</span>
<div style="left:329.00px;top:844.50px;width:19.08px;height:15.00px;background:#638ec6;"></div>
<span style="top:846.90px;font-size:13px;line-height:1;color:#000;letter-spacing:0.187px;left:131.20px;">Patch Kit/8 Patches</span>
<span style="top:846.90px;font-size:13px;line-height:1;color:#000;letter-spacing:-0.230px;left:445.20px;">9351</span>
<span style="top:846.90px;font-size:13px;line-height:1;color:#000;letter-spacing:-0.230px;left:547.00px;">15710</span>
<span style="top:846.90px;font-size:13px;line-height:1;color:#000;letter-spacing:-0.230px;left:641.60px;">6359</span>
<span style="top:846.90px;font-size:13px;line-height:1;color:#000;letter-spacing:-0.174px;left:679.60px;">0.404774029</span>
<div style="left:329.00px;top:864.50px;width:5.70px;height:15.00px;background:#638ec6;"></div>
<span style="top:866.90px;font-size:13px;line-height:1;color:#000;letter-spacing:0.080px;left:131.20px;">Road Tire Tube</span>
<span style="top:866.90px;font-size:13px;line-height:1;color:#000;letter-spacing:-0.230px;left:445.20px;">2793</span>
<span style="top:866.90px;font-size:13px;line-height:1;color:#000;letter-spacing:-0.230px;left:554.00px;">9456</span>
<span style="top:866.90px;font-size:13px;line-height:1;color:#000;letter-spacing:-0.230px;left:641.60px;">6663</span>
<span style="top:866.90px;font-size:13px;line-height:1;color:#000;letter-spacing:-0.168px;left:686.60px;">0.70463198</span>
<span style="top:886.90px;font-size:13px;line-height:1;color:#000;letter-spacing:0.423px;left:131.20px;">Touring Tire</span>
<span style="top:886.90px;font-size:13px;line-height:1;color:#000;letter-spacing:-0.230px;left:452.20px;">210</span>
<span style="top:886.90px;font-size:13px;line-height:1;color:#000;letter-spacing:-0.230px;left:554.00px;">5139</span>
<span style="top:886.90px;font-size:13px;line-height:1;color:#000;letter-spacing:-0.230px;left:641.60px;">2829</span>
<span style="top:886.90px;font-size:13px;line-height:1;color:#000;letter-spacing:-0.174px;left:679.60px;">0.550496205</span>
<div style="left:329.00px;top:904.50px;width:4.53px;height:15.00px;background:#638ec6;"></div>
<span style="top:906.90px;font-size:13px;line-height:1;color:#000;letter-spacing:0.327px;left:131.20px;">Touring Tire Tube</span>
<span style="top:906.90px;font-size:13px;line-height:1;color:#000;letter-spacing:-0.230px;left:445.20px;">2220</span>
<span style="top:906.90px;font-size:13px;line-height:1;color:#000;letter-spacing:-0.230px;left:554.00px;">9309</span>
<span style="top:906.90px;font-size:13px;line-height:1;color:#000;letter-spacing:-0.230px;left:641.60px;">4869</span>
<span style="top:906.90px;font-size:13px;line-height:1;color:#000;letter-spacing:-0.174px;left:679.60px;">0.523042217</span>
<div style="left:329.00px;top:924.50px;width:3.05px;height:15.00px;background:#638ec6;"></div>
<div style="left:477.10px;top:924.50px;width:72.00px;height:15.00px;background:#63be7b;"></div>
<div style="left:586.10px;top:924.50px;width:48.60px;height:15.00px;background:#ffb628;"></div>
<svg style="left:94.20px;top:927.60px;width:9px;height:9px" viewBox="0 0 9 9"><rect x=".5" y=".5" width="8" height="8" rx="1.2" fill="#eef1f6" stroke="#a3adbb" stroke-width="1"/><path d="M2.3 4.5H6.7" stroke="#3c4a66" stroke-width="1.2"/></svg>
<span style="top:926.90px;font-size:13px;line-height:1;color:#000;letter-spacing:-0.538px;font-weight:bold;left:105.00px;">Bikes</span>
<span style="top:926.90px;font-size:13px;line-height:1;color:#000;letter-spacing:-0.230px;font-weight:bold;left:445.20px;">1497</span>
<span style="top:926.90px;font-size:13px;line-height:1;color:#000;letter-spacing:-0.230px;font-weight:bold;left:533.00px;">2482043</span>
<span style="top:926.90px;font-size:13px;line-height:1;color:#000;letter-spacing:-0.230px;font-weight:bold;left:627.60px;">702515</span>
<span style="top:926.90px;font-size:13px;line-height:1;color:#000;letter-spacing:-0.174px;font-weight:bold;left:679.60px;">0.283039013</span>
<div style="left:329.00px;top:944.50px;width:1.20px;height:15.00px;background:#638ec6;opacity:0.55;"></div>
<div style="left:477.10px;top:944.50px;width:19.71px;height:15.00px;background:#63be7b;"></div>
<div style="left:586.10px;top:944.50px;width:16.06px;height:15.00px;background:#ffb628;"></div>
<svg style="left:107.40px;top:947.60px;width:9px;height:9px" viewBox="0 0 9 9"><rect x=".5" y=".5" width="8" height="8" rx="1.2" fill="#eef1f6" stroke="#a3adbb" stroke-width="1"/><path d="M2.3 4.5H6.7" stroke="#3c4a66" stroke-width="1.2"/></svg>
<span style="top:946.90px;font-size:13px;line-height:1;color:#000;letter-spacing:-0.005px;font-weight:bold;left:118.00px;">Mountain Bikes</span>
<span style="top:946.90px;font-size:13px;line-height:1;color:#000;letter-spacing:-0.230px;font-weight:bold;left:452.20px;">362</span>
<span style="top:946.90px;font-size:13px;line-height:1;color:#000;letter-spacing:-0.230px;font-weight:bold;left:540.00px;">679575</span>
<span style="top:946.90px;font-size:13px;line-height:1;color:#000;letter-spacing:-0.110px;font-weight:bold;left:627.60px;">232118</span>
<span style="top:946.90px;font-size:13px;line-height:1;color:#000;letter-spacing:-0.174px;font-weight:bold;left:679.60px;">0.341563477</span>
<div style="left:477.10px;top:964.50px;width:1.20px;height:15.00px;background:#63be7b;opacity:0.85;"></div>
<div style="left:586.10px;top:964.50px;width:1.20px;height:15.00px;background:#ffb628;opacity:0.66;"></div>
<span style="top:966.90px;font-size:13px;line-height:1;color:#000;letter-spacing:0.292px;left:131.20px;">Mountain-100 Black, 38</span>
<span style="top:966.90px;font-size:13px;line-height:1;color:#000;letter-spacing:-0.230px;left:459.20px;">14</span>
<span style="top:966.90px;font-size:13px;line-height:1;color:#000;letter-spacing:-0.230px;left:547.00px;">39251</span>
<span style="top:966.90px;font-size:13px;line-height:1;color:#000;letter-spacing:-0.230px;left:634.60px;">12679</span>
<span style="top:966.90px;font-size:13px;line-height:1;color:#000;letter-spacing:-0.174px;left:679.60px;">0.323023617</span>
<div style="left:477.10px;top:984.50px;width:1.20px;height:15.00px;background:#63be7b;opacity:0.67;"></div>
<div style="left:586.10px;top:984.50px;width:1.20px;height:15.00px;background:#ffb628;opacity:0.58;"></div>
<span style="top:986.90px;font-size:13px;line-height:1;color:#000;letter-spacing:0.292px;left:131.20px;">Mountain-100 Black, 42</span>
<span style="top:986.90px;font-size:13px;line-height:1;color:#000;letter-spacing:0.252px;left:459.20px;">11</span>
<span style="top:986.90px;font-size:13px;line-height:1;color:#000;letter-spacing:-0.230px;left:547.00px;">30839</span>
<span style="top:986.90px;font-size:13px;line-height:1;color:#000;letter-spacing:0.156px;left:634.60px;">11138</span>
<span style="top:986.90px;font-size:13px;line-height:1;color:#000;letter-spacing:-0.086px;left:679.60px;">0.361171893</span>
<div style="left:671.00px;top:342.00px;width:87.00px;height:22.00px;background:transparent;border:2px solid #217346;"></div>
<div style="left:753.50px;top:359.50px;width:7.00px;height:7.00px;background:#217346;border:1px solid #fff;"></div>
<div style="left:1060.08px;top:311.88px;width:512.16px;height:489.60px;background:#f0f0f0;border:1px solid #767676;box-shadow:0 2px 14px 2px rgba(0,0,0,.33);"></div>
<div style="left:1061.04px;top:313.56px;width:510.24px;height:29.40px;background:#fff;"></div>
<span style="top:321.40px;font-size:12.00px;line-height:1;color:#000;letter-spacing:-0.071px;left:1069.44px;">New Formatting Rule</span>
<span style="top:322.12px;font-size:12.00px;line-height:1;color:#222;left:1500.00px;">?</span>
<svg style="left:1543.20px;top:321.60px;width:10.08px;height:10.56px;" viewBox="0 0 8.4 8.8"><path d="M.5 .5L7.9 8.3M7.9 .5L.5 8.3" stroke="#222" stroke-width="1" fill="none"/></svg>
<div style="left:1066.68px;top:350.16px;width:498.72px;height:98.04px;background:#fff;border:1px solid #b9b9b9;"></div>
<span style="top:363.76px;font-size:12.00px;line-height:1;color:#000;letter-spacing:-0.300px;left:1077.24px;"><u>A</u>pply Rule To:</span>
<div style="left:1160.52px;top:358.80px;width:372.84px;height:21.96px;background:#fff;border:1px solid #b4b4b4;"></div>
<span style="top:363.76px;font-size:12.00px;line-height:1;color:#000;letter-spacing:-0.512px;left:1165.20px;">=$F$7</span>
<div style="left:1532.28px;top:358.92px;width:21.24px;height:21.48px;background:#e4e4e4;border:1px solid #9a9a9a;"></div>
<svg style="left:1538.04px;top:364.08px;width:9.60px;height:10.80px;" viewBox="0 0 8 9"><path d="M4 .6L7.4 4.4H5V6.6H3V4.4H.6Z" fill="#1a1a1a"/><rect x=".8" y="7.4" width="6.4" height="1.1" fill="#1a1a1a"/></svg>
<div style="left:1082.40px;top:386.64px;width:14.28px;height:14.52px;background:#fff;border:1px solid #333;border-radius:50%;"></div>
<span style="top:389.44px;font-size:12.00px;line-height:1;color:#000;letter-spacing:-0.531px;left:1103.40px;">Se<u>l</u>ected cells</span>
<div style="left:1082.40px;top:405.60px;width:14.28px;height:14.52px;background:#fff;border:1px solid #333;border-radius:50%;"></div>
<span style="top:408.64px;font-size:12.00px;line-height:1;color:#000;letter-spacing:-0.229px;left:1103.40px;">All cells sho<u>w</u>ing "Margins" values</span>
<div style="left:1082.40px;top:424.68px;width:14.28px;height:14.52px;background:#fff;border:1px solid #333;border-radius:50%;"></div><div style="left:1086.12px;top:428.64px;width:6.48px;height:6.48px;background:#111;border-radius:50%;"></div>
<div style="left:1100.40px;top:424.68px;width:247.92px;height:17.88px;border:1px dotted #333;"></div>
<span style="top:427.00px;font-size:12.00px;line-height:1;color:#000;letter-spacing:-0.212px;left:1103.40px;">All cells showi<u>n</u>g "Margins" values for "Product"</span>
<div style="left:1070.40px;top:418.32px;width:287.40px;height:32.88px;border:4.2px solid #fe0000;"></div>
<span style="top:452.80px;font-size:12.00px;line-height:1;color:#000;letter-spacing:-0.526px;left:1068.24px;"><u>S</u>elect a Rule Type:</span>
<div style="left:1067.28px;top:467.16px;width:498.12px;height:95.76px;background:#fff;border:1px solid #7a7a7a;border-right-color:#bdbdbd;border-bottom-color:#bdbdbd;box-shadow:inset 1px 1px 0 #a0a0a0;"></div>
<div style="left:1070.76px;top:470.88px;width:490.80px;height:16.32px;background:#e2e2e8;"></div>
<span style="top:474.52px;font-size:12.00px;line-height:1;color:#000;letter-spacing:-0.242px;left:1087.92px;">Format all cells based on their values</span>
<svg style="left:1076.64px;top:477.96px;width:8.40px;height:6.00px;" viewBox="0 0 7 5"><path d="M0 2.5H2" stroke="#222" stroke-width="1"/><path d="M1.8 .2L6.4 2.5L1.8 4.8Z" fill="#222"/></svg>
<span style="top:492.76px;font-size:12.00px;line-height:1;color:#000;letter-spacing:-0.146px;left:1087.92px;">Format only cells that contain</span>
<svg style="left:1076.64px;top:496.20px;width:8.40px;height:6.00px;" viewBox="0 0 7 5"><path d="M0 2.5H2" stroke="#222" stroke-width="1"/><path d="M1.8 .2L6.4 2.5L1.8 4.8Z" fill="#222"/></svg>
<div style="left:1071.00px;top:489.24px;width:490.20px;height:0.96px;background:#f1f1f1;"></div>
<span style="top:510.64px;font-size:12.00px;line-height:1;color:#000;letter-spacing:-0.118px;left:1087.92px;">Format only top or bottom ranked values</span>
<svg style="left:1076.64px;top:514.08px;width:8.40px;height:6.00px;" viewBox="0 0 7 5"><path d="M0 2.5H2" stroke="#222" stroke-width="1"/><path d="M1.8 .2L6.4 2.5L1.8 4.8Z" fill="#222"/></svg>
<div style="left:1071.00px;top:507.12px;width:490.20px;height:0.96px;background:#f1f1f1;"></div>
<span style="top:528.88px;font-size:12.00px;line-height:1;color:#000;letter-spacing:-0.240px;left:1087.92px;">Format only values that are above or below average</span>
<svg style="left:1076.64px;top:532.32px;width:8.40px;height:6.00px;" viewBox="0 0 7 5"><path d="M0 2.5H2" stroke="#222" stroke-width="1"/><path d="M1.8 .2L6.4 2.5L1.8 4.8Z" fill="#222"/></svg>
<div style="left:1071.00px;top:525.36px;width:490.20px;height:0.96px;background:#f1f1f1;"></div>
<span style="top:546.76px;font-size:12.00px;line-height:1;color:#000;letter-spacing:-0.147px;left:1087.92px;">Use a formula to determine which cells to format</span>
<svg style="left:1076.64px;top:550.20px;width:8.40px;height:6.00px;" viewBox="0 0 7 5"><path d="M0 2.5H2" stroke="#222" stroke-width="1"/><path d="M1.8 .2L6.4 2.5L1.8 4.8Z" fill="#222"/></svg>
<div style="left:1071.00px;top:543.24px;width:490.20px;height:0.96px;background:#f1f1f1;"></div>
<span style="top:580.12px;font-size:12.00px;line-height:1;color:#000;letter-spacing:-0.209px;left:1068.24px;"><u>E</u>dit the Rule Description:</span>
<div style="left:1066.56px;top:593.76px;width:498.84px;height:174.12px;background:#fff;border:1px solid #8c8c8c;"></div>
<span style="top:603.76px;font-size:12.00px;line-height:1;color:#000;font-weight:bold;letter-spacing:-0.599px;left:1077.12px;">Format all cells based on their values:</span>
<span style="top:620.32px;font-size:12.00px;line-height:1;color:#000;letter-spacing:-0.458px;left:1077.12px;">F<u>o</u>rmat Style:</span>
<div style="left:1152.60px;top:619.08px;width:129.72px;height:20.88px;background:#fff;border:1px solid #b4b4b4;"></div>
<span style="top:622.72px;font-size:12.00px;line-height:1;color:#000;letter-spacing:-0.534px;left:1157.04px;">2-Color Scale</span>
<div style="left:1263.12px;top:620.64px;width:17.52px;height:17.76px;background:#e4e4e4;border:1px solid #adadad;"></div><svg style="left:1267.44px;top:627.12px;width:8.64px;height:5.52px;" viewBox="0 0 7.2 4.6"><path d="M.6 .6L3.6 3.6L6.6 .6" fill="none" stroke="#444" stroke-width="1"/></svg>
<span style="top:647.92px;font-size:12.00px;line-height:1;color:#000;letter-spacing:-0.113px;left:1119.96px;">Minimum</span>
<span style="top:647.92px;font-size:12.00px;line-height:1;color:#000;letter-spacing:-0.537px;left:1416.24px;">Maximum</span>
<span style="top:668.32px;font-size:12.00px;line-height:1;color:#000;letter-spacing:-0.614px;left:1077.12px;"><u>T</u>ype:</span>
<span style="top:693.16px;font-size:12.00px;line-height:1;color:#000;letter-spacing:-0.362px;left:1077.12px;"><u>V</u>alue:</span>
<span style="top:714.52px;font-size:12.00px;line-height:1;color:#000;letter-spacing:-0.275px;left:1077.12px;"><u>C</u>olor:</span>
<div style="left:1118.16px;top:662.28px;width:139.80px;height:21.84px;background:#fff;border:1px solid #b4b4b4;"></div>
<span style="top:668.08px;font-size:12.00px;line-height:1;color:#000;letter-spacing:-0.340px;left:1123.32px;">Lowest Value</span>
<div style="left:1238.52px;top:664.20px;width:17.52px;height:18.00px;background:#e4e4e4;border:1px solid #adadad;"></div><svg style="left:1242.84px;top:670.68px;width:8.64px;height:5.52px;" viewBox="0 0 7.2 4.6"><path d="M.6 .6L3.6 3.6L6.6 .6" fill="none" stroke="#444" stroke-width="1"/></svg>
<div style="left:1118.16px;top:686.88px;width:118.92px;height:21.24px;background:#fff;border:1px solid #b4b4b4;"></div>
<span style="top:692.80px;font-size:12.00px;line-height:1;color:#6d6d6d;letter-spacing:-0.465px;left:1123.32px;">(Lowest value)</span>
<div style="left:1235.88px;top:686.88px;width:22.08px;height:21.24px;background:#f4f4f4;border:1px solid #8c8c8c;"></div>
<svg style="left:1241.88px;top:691.92px;width:9.60px;height:10.80px;" viewBox="0 0 8 9"><path d="M4 .6L7.4 4.4H5V6.6H3V4.4H.6Z" fill="#1a1a1a"/><rect x=".8" y="7.4" width="6.4" height="1.1" fill="#1a1a1a"/></svg>
<div style="left:1118.16px;top:710.88px;width:139.80px;height:18.48px;background:#fff;border:1px solid #b4b4b4;"></div>
<div style="left:1120.92px;top:714.12px;width:116.16px;height:12.24px;background:#f96b29;"></div>
<div style="left:1238.52px;top:711.96px;width:17.52px;height:16.32px;background:#e4e4e4;border:1px solid #adadad;"></div><svg style="left:1242.84px;top:718.44px;width:8.64px;height:5.52px;" viewBox="0 0 7.2 4.6"><path d="M.6 .6L3.6 3.6L6.6 .6" fill="none" stroke="#444" stroke-width="1"/></svg>
<div style="left:1414.20px;top:662.28px;width:140.04px;height:21.84px;background:#fff;border:1px solid #b4b4b4;"></div>
<span style="top:668.08px;font-size:12.00px;line-height:1;color:#000;letter-spacing:-0.214px;left:1419.36px;">Highest Value</span>
<div style="left:1534.80px;top:664.20px;width:17.52px;height:18.00px;background:#e4e4e4;border:1px solid #adadad;"></div><svg style="left:1539.12px;top:670.68px;width:8.64px;height:5.52px;" viewBox="0 0 7.2 4.6"><path d="M.6 .6L3.6 3.6L6.6 .6" fill="none" stroke="#444" stroke-width="1"/></svg>
<div style="left:1414.20px;top:686.88px;width:119.16px;height:21.24px;background:#fff;border:1px solid #b4b4b4;"></div>
<span style="top:692.80px;font-size:12.00px;line-height:1;color:#6d6d6d;letter-spacing:-0.372px;left:1419.36px;">(Highest value)</span>
<div style="left:1532.16px;top:686.88px;width:22.08px;height:21.24px;background:#f4f4f4;border:1px solid #8c8c8c;"></div>
<svg style="left:1538.16px;top:691.92px;width:9.60px;height:10.80px;" viewBox="0 0 8 9"><path d="M4 .6L7.4 4.4H5V6.6H3V4.4H.6Z" fill="#1a1a1a"/><rect x=".8" y="7.4" width="6.4" height="1.1" fill="#1a1a1a"/></svg>
<div style="left:1414.20px;top:710.88px;width:140.04px;height:18.48px;background:#fff;border:1px solid #b4b4b4;"></div>
<div style="left:1416.96px;top:714.12px;width:116.40px;height:12.24px;background:#ffea8c;"></div>
<div style="left:1534.80px;top:711.96px;width:17.52px;height:16.32px;background:#e4e4e4;border:1px solid #adadad;"></div><svg style="left:1539.12px;top:718.44px;width:8.64px;height:5.52px;" viewBox="0 0 7.2 4.6"><path d="M.6 .6L3.6 3.6L6.6 .6" fill="none" stroke="#444" stroke-width="1"/></svg>
<span style="top:743.08px;font-size:12.00px;line-height:1;color:#000;font-weight:bold;letter-spacing:-0.695px;left:1077.12px;">Preview:</span>
<div style="left:1123.56px;top:735.48px;width:430.68px;height:25.68px;background:#fff;border:1px solid #8c8c8c;"></div>
<div style="left:1127.04px;top:738.84px;width:425.16px;height:19.92px;background:linear-gradient(90deg,#f96b29 0%,#fdb56a 55%,#ffea8c 100%);"></div>
<div style="left:1401.36px;top:771.24px;width:73.92px;height:22.68px;background:#e5f1fb;border:1px solid #0078d7;"></div>
<span style="top:776.92px;font-size:12.00px;line-height:1;color:#000;letter-spacing:-1.229px;left:1431.12px;">OK</span>
<div style="left:1485.36px;top:771.24px;width:73.92px;height:22.68px;background:#e1e1e1;border:1px solid #adadad;"></div>
<span style="top:776.92px;font-size:12.00px;line-height:1;color:#000;letter-spacing:-0.606px;left:1505.28px;">Cancel</span>
<div style="left:1898.64px;top:201.60px;width:21.36px;height:816.00px;background:#e6e6e6;"></div>
<div style="left:1898.16px;top:222.96px;width:1.08px;height:768.00px;background:#a6a6a6;"></div>
<div style="left:1902.00px;top:219.60px;width:14.88px;height:757.20px;background:#dcdcdc;"></div>
<div style="left:1902.00px;top:205.44px;width:14.88px;height:14.40px;background:#fff;border:1px solid #c4c4c4;"></div>
<svg style="left:1906.08px;top:210.48px;width:6.72px;height:4.08px;" viewBox="0 0 5.6 3.4"><path d="M0 3.4H5.6L2.8 0Z" fill="#606060"/></svg>
<div style="left:1902.00px;top:219.60px;width:14.88px;height:164.40px;background:#fff;border:1px solid #c4c4c4;"></div>
<div style="left:1902.00px;top:976.08px;width:14.88px;height:14.40px;background:#fff;border:1px solid #c4c4c4;"></div>
<svg style="left:1906.08px;top:981.60px;width:6.72px;height:4.08px;" viewBox="0 0 5.6 3.4"><path d="M0 0H5.6L2.8 3.4Z" fill="#606060"/></svg>
<div style="left:0.00px;top:990.00px;width:1920.00px;height:28.08px;background:#e6e6e6;"></div>
<div style="left:0.00px;top:990.00px;width:1898.88px;height:1.08px;background:#a0a0a0;"></div>
<svg style="left:26.40px;top:999.60px;width:4.80px;height:7.68px;" viewBox="0 0 4 6.4"><path d="M4 0V6.4L0 3.2Z" fill="#c2c2c2"/></svg>
<svg style="left:55.20px;top:999.60px;width:4.80px;height:7.68px;" viewBox="0 0 4 6.4"><path d="M0 0V6.4L4 3.2Z" fill="#c2c2c2"/></svg>
<div style="left:99.72px;top:994.80px;width:1.08px;height:18.60px;background:#b8b8b8;"></div>
<div style="left:152.52px;top:994.80px;width:1.08px;height:18.60px;background:#b8b8b8;"></div>
<div style="left:208.92px;top:994.80px;width:1.08px;height:18.60px;background:#b8b8b8;"></div>
<span style="top:997.86px;font-size:12.40px;line-height:1;color:#444;letter-spacing:0.052px;left:113.40px;">Data</span>
<span style="top:997.86px;font-size:12.40px;line-height:1;color:#444;letter-spacing:-0.017px;left:167.28px;">Pivot</span>
<span style="top:997.86px;font-size:12.40px;line-height:1;color:#444;letter-spacing:0.420px;left:222.36px;">Dashboard</span>
<div style="left:300.48px;top:990.48px;width:66.48px;height:24.72px;background:#fff;border-bottom:2.4px solid #217346;border-left:1px solid #c8c8c8;border-right:1px solid #c8c8c8;"></div>
<span style="top:997.86px;font-size:12.40px;line-height:1;color:#217346;font-weight:bold;letter-spacing:0.225px;left:312.60px;">Details</span>
<div style="left:400.08px;top:996.48px;width:14.64px;height:14.64px;border:1px solid #7a7a7a;border-radius:50%;"></div>
<svg style="left:403.56px;top:999.96px;width:7.68px;height:7.68px;" viewBox="0 0 6.4 6.4"><path d="M3.2 0V6.4M0 3.2H6.4" stroke="#7a7a7a" stroke-width="1"/></svg>
<div style="left:1152.24px;top:998.88px;width:2.04px;height:2.04px;background:#9c9c9c;"></div>
<div style="left:1152.24px;top:1002.96px;width:2.04px;height:2.04px;background:#9c9c9c;"></div>
<div style="left:1152.24px;top:1007.04px;width:2.04px;height:2.04px;background:#9c9c9c;"></div>
<div style="left:1168.80px;top:997.08px;width:730.20px;height:14.88px;background:#dcdcdc;"></div>
<div style="left:1168.80px;top:997.08px;width:15.12px;height:14.88px;background:#fff;border:1px solid #b4b4b4;"></div>
<svg style="left:1174.08px;top:1001.28px;width:4.08px;height:6.72px;" viewBox="0 0 3.4 5.6"><path d="M3.4 0V5.6L0 2.8Z" fill="#606060"/></svg>
<div style="left:1183.92px;top:997.08px;width:668.40px;height:14.88px;background:#fff;border:1px solid #b4b4b4;"></div>
<div style="left:1884.48px;top:997.08px;width:14.64px;height:14.88px;background:#fff;border:1px solid #b4b4b4;"></div>
<svg style="left:1890.00px;top:1001.28px;width:4.08px;height:6.72px;" viewBox="0 0 3.4 5.6"><path d="M0 0V5.6L3.4 2.8Z" fill="#606060"/></svg>
<div style="left:0.00px;top:1017.84px;width:1920.00px;height:22.32px;background:#f3f3f3;border-top:1px solid #c9c9c9;"></div>
<span style="top:1022.95px;font-size:11.40px;line-height:1;color:#444;letter-spacing:-0.471px;left:8.40px;">Ready</span>
<svg style="left:1633.20px;top:1022.40px;width:13.20px;height:12.72px;" viewBox="0 0 11 10.6"><path d="M.5 .5H10.5V10H.5ZM.5 3.6H10.5M.5 6.8H10.5M3.9 .5V10M7.2 .5V10" fill="none" stroke="#8c8c8c" stroke-width=".9"/></svg>
<svg style="left:1673.52px;top:1022.40px;width:13.68px;height:12.72px;" viewBox="0 0 11.4 10.6"><rect x=".5" y=".5" width="10.4" height="9.6" fill="none" stroke="#8c8c8c" stroke-width=".9"/><rect x="3" y="2.6" width="5.4" height="5.4" fill="none" stroke="#8c8c8c" stroke-width=".8"/><path d="M4.4 4.4H7M4.4 6H7" stroke="#8c8c8c" stroke-width=".6"/></svg>
<svg style="left:1713.12px;top:1021.68px;width:13.68px;height:13.20px;" viewBox="0 0 11.4 11"><path d="M.5 .5H10.9V10.4H.5Z" fill="none" stroke="#8c8c8c" stroke-width=".9"/><path d="M.5 5.8H10.9M4.2 .5V5.8M6.6 .5V5.8" stroke="#8c8c8c" stroke-width=".9"/></svg>
<div style="left:1746.48px;top:1028.40px;width:7.20px;height:1.08px;background:#bdbdbd;"></div>
<div style="left:1759.20px;top:1028.40px;width:98.88px;height:1.08px;background:#bdbdbd;"></div>
<div style="left:1808.88px;top:1025.28px;width:1.68px;height:7.20px;background:#adadad;"></div>
<svg style="left:1863.12px;top:1024.56px;width:8.40px;height:8.40px;" viewBox="0 0 7 7"><path d="M3.5 0V7M0 3.5H7" stroke="#bdbdbd" stroke-width="1"/></svg>
<span style="top:1023.55px;font-size:11.40px;line-height:1;color:#b4b4b4;letter-spacing:-0.719px;left:1885.56px;">100%</span>
<div style="left:0.00px;top:1039.92px;width:1920.00px;height:40.08px;background:#101010;"></div>
<svg style="left:15.36px;top:1051.92px;width:17.28px;height:16.32px;" viewBox="0 0 14.4 13.6"><path d="M0 2L5.9 1.2V6.4H0ZM6.8 1.1L14.4 0V6.4H6.8ZM0 7.2H5.9V12.4L0 11.6ZM6.8 7.2H14.4V13.6L6.8 12.5Z" fill="#fff"/></svg>
<svg style="left:63.60px;top:1051.68px;width:18.00px;height:18.00px;" viewBox="0 0 15 15"><circle cx="9.2" cy="5.6" r="4.6" fill="none" stroke="#fff" stroke-width="1.3"/><path d="M6 9L.8 14.2" stroke="#fff" stroke-width="1.5"/></svg>
<svg style="left:110.40px;top:1051.20px;width:18.00px;height:18.00px;" viewBox="0 0 15 15"><circle cx="7.6" cy="7.5" r="5.9" fill="none" stroke="#fff" stroke-width="2"/></svg>
<svg style="left:157.20px;top:1050.00px;width:20.40px;height:19.20px;" viewBox="0 0 17 16"><rect x="2.8" y="5.2" width="7.6" height="5" fill="none" stroke="#fff" stroke-width="1.3"/><path d="M2.2 3.6V1.6H11V3.6M2.2 11.8V13.8H11V11.8" fill="none" stroke="#fff" stroke-width="1.3"/><path d="M14.4 .6V14.8" stroke="#fff" stroke-width="1.2"/><rect x="13.2" y="6.4" width="2.4" height="2.2" fill="#fff"/></svg>
<div style="left:292.56px;top:1039.92px;width:48.72px;height:40.08px;background:#99501f;"></div>
<div style="left:488.64px;top:1039.92px;width:48.72px;height:40.08px;background:#353535;"></div>
<div style="left:198.72px;top:1077.60px;width:40.08px;height:2.40px;background:#76b9ed;"></div>
<div style="left:247.68px;top:1077.60px;width:40.08px;height:2.40px;background:#76b9ed;"></div>
<div style="left:345.60px;top:1077.60px;width:40.08px;height:2.40px;background:#76b9ed;"></div>
<div style="left:394.56px;top:1077.60px;width:40.08px;height:2.40px;background:#76b9ed;"></div>
<div style="left:443.52px;top:1077.60px;width:40.08px;height:2.40px;background:#76b9ed;"></div>
<div style="left:541.44px;top:1077.60px;width:40.08px;height:2.40px;background:#76b9ed;"></div>
<div style="left:292.56px;top:1077.60px;width:48.72px;height:2.40px;background:#f7731c;"></div>
<div style="left:488.64px;top:1077.60px;width:48.72px;height:2.40px;background:#76b9ed;"></div>
<svg style="left:207.12px;top:1049.52px;width:23.28px;height:19.68px;" viewBox="0 0 19.4 16.4"><path d="M.4 2.2C.4 1.2 1 .6 2 .6H7L8.6 2.6H17.6C18.4 2.6 19 3.2 19 4V15H.4Z" fill="#f4b63f"/><rect x=".4" y="4.4" width="18.6" height="10.8" rx=".6" fill="#ffd66b"/><rect x="3.6" y="9.4" width="12.2" height="6.8" fill="#2e9be4"/><rect x="7.6" y="12.4" width="4.2" height="3.8" fill="#ffd66b"/></svg>
<svg style="left:256.32px;top:1048.80px;width:22.80px;height:22.80px;" viewBox="0 0 19 19"><circle cx="9.5" cy="9.5" r="9.2" fill="#db4437"/><path d="M9.5 9.5L1.6 14.2A9.2 9.2 0 0 0 9.6 18.7L13.6 11.8Z" fill="#0f9d58"/><path d="M9.5 9.5L13.6 11.8L9.6 18.7A9.2 9.2 0 0 0 17.8 5.4H9.5Z" fill="#ffcd40"/><path d="M1.4 5A9.2 9.2 0 0 0 1.6 14.2L5.6 7.4Z" fill="#0f9d58"/><circle cx="9.5" cy="9.5" r="4.3" fill="#f1f1f1"/><circle cx="9.5" cy="9.5" r="3.4" fill="#4285f4"/></svg>
<svg style="left:304.80px;top:1048.80px;width:24.00px;height:23.28px;" viewBox="0 0 20 19.4"><rect x=".3" y=".3" width="19.4" height="18.8" rx="3.6" fill="#12c024"/><path d="M10 3.6C5.8 3.6 3 6 3 8.8C3 11.4 5.2 13.4 8.4 13.8C9 14 9 14.4 8.8 15.4C8.8 15.8 9 15.8 9.4 15.6C11 14.8 17 12 17 8.8C17 6 14.2 3.6 10 3.6Z" fill="#fff"/><path d="M5.6 7.4V10.2H7M8.2 7.4V10.2M9.6 10.2V7.4L11.6 10.2V7.4M14.4 7.4H12.9V10.2H14.4M12.9 8.8H14.2" fill="none" stroke="#12c024" stroke-width=".8"/></svg>
<svg style="left:354.24px;top:1048.80px;width:23.28px;height:23.28px;" viewBox="0 0 19.4 19.4"><circle cx="9.7" cy="9.7" r="9.5" fill="#1ed760"/><path d="M4.4 7C8 5.8 12.4 6.2 15.6 8M5 10C8 9.2 11.6 9.6 14.4 11.2M5.6 12.8C8 12.2 10.8 12.4 13.2 13.8" fill="none" stroke="#101010" stroke-width="1.5" stroke-linecap="round"/></svg>
<svg style="left:402.00px;top:1047.12px;width:25.20px;height:25.20px;" viewBox="0 0 21 21"><defs><linearGradient id="npg" x1="0" y1="1" x2="1" y2="0"><stop offset="0" stop-color="#f4fafe"/><stop offset=".55" stop-color="#b4d8ec"/><stop offset="1" stop-color="#4e9cc4"/></linearGradient></defs><path d="M6.2 1.4L17.2 3.6L18.8 18.2L1 13.6Z" fill="url(#npg)"/><path d="M6.2 1.4L17.2 3.6L17.5 6L5.4 3.4Z" fill="#dff0fa"/><path d="M17.2 3.6L18.8 18.2L17.6 18L16.2 3.4Z" fill="#c8946a"/><path d="M1 13.6L18.8 18.2L18.6 19.4L.8 14.8Z" fill="#f8fbfd"/></svg>
<svg style="left:451.68px;top:1048.32px;width:24.00px;height:24.00px;" viewBox="0 0 20 20"><defs><radialGradient id="utg" cx=".4" cy=".3" r=".8"><stop offset="0" stop-color="#9ad45c"/><stop offset="1" stop-color="#62a02e"/></radialGradient></defs><circle cx="10" cy="10" r="9.8" fill="url(#utg)"/><text x="4.4" y="14.2" font-family="Liberation Sans" font-weight="bold" font-size="17" fill="#fff">µ</text></svg>
<svg style="left:500.88px;top:1049.28px;width:24.48px;height:22.08px;" viewBox="0 0 20.4 18.4"><rect x="5.6" y=".4" width="14.4" height="17.6" rx="1" fill="#21a366"/><rect x="12.8" y=".4" width="7.2" height="4.4" fill="#33c481"/><rect x="12.8" y="4.8" width="7.2" height="4.4" fill="#21a366"/><rect x="5.6" y="4.8" width="7.2" height="4.4" fill="#107c41"/><rect x="5.6" y="9.2" width="7.2" height="8.8" fill="#185c37"/><rect x="12.8" y="9.2" width="7.2" height="4.4" fill="#107c41"/><rect x="12.8" y="13.6" width="7.2" height="4.4" fill="#185c37"/><rect x=".4" y="4" width="10.4" height="10.4" rx="1" fill="#107c41"/><path d="M3.4 6.4L7.8 12M7.8 6.4L3.4 12" stroke="#fff" stroke-width="1.5"/></svg>
<svg style="left:549.12px;top:1048.08px;width:25.20px;height:24.00px;" viewBox="0 0 21 20"><path d="M9 4.4C4 4.4 .6 7.8 .6 11.6C.6 15.6 4.4 18.6 9.4 18.6C11.4 18.6 11.6 17.4 11 16.4C10.2 15 11 13.8 12.8 13.8C15.6 13.8 17.6 12.4 17.6 10C17.6 6.6 13.6 4.4 9 4.4Z" fill="#e8e4dc" stroke="#8a96a8" stroke-width=".8"/><circle cx="5" cy="9" r="1.5" fill="#e8483c"/><circle cx="9" cy="7.4" r="1.5" fill="#f4b63f"/><circle cx="13.2" cy="8.8" r="1.5" fill="#3c8ce8"/><circle cx="4.8" cy="13.4" r="1.5" fill="#58b848"/><path d="M19.6 1L10.6 12.4L9.2 11.2L18.4 .2Z" fill="#d89048"/><path d="M9.2 11.2L10.6 12.4L8.4 14.4Z" fill="#6a4a2c"/></svg>
<svg style="left:1713.60px;top:1056.72px;width:11.28px;height:6.72px;" viewBox="0 0 9.4 5.6"><path d="M.6 5L4.7 .8L8.8 5" fill="none" stroke="#fff" stroke-width="1.1"/></svg>
<svg style="left:1735.68px;top:1056.00px;width:16.80px;height:9.60px;" viewBox="0 0 14 8"><rect x=".5" y=".5" width="11.6" height="6.8" fill="none" stroke="#fff" stroke-width="1"/><rect x="1.6" y="1.6" width="5" height="4.6" fill="#fff"/><rect x="12.4" y="2.4" width="1.2" height="3" fill="#fff"/></svg>
<svg style="left:1761.12px;top:1054.08px;width:14.40px;height:13.92px;" viewBox="0 0 12 11.6"><path d="M1 11C1 6 5 1.6 11 1.6" fill="none" stroke="#fff" stroke-width="1"/><path d="M3.6 11C3.6 7.4 6.6 4.2 11 4.2" fill="none" stroke="#fff" stroke-width="1"/><path d="M6.2 11C6.2 8.8 8.2 6.8 11 6.8" fill="none" stroke="#fff" stroke-width="1"/><circle cx="9.6" cy="10" r="1.3" fill="#fff"/></svg>
<svg style="left:1782.72px;top:1054.32px;width:16.08px;height:12.72px;" viewBox="0 0 13.4 10.6"><path d="M.6 3.6H3L6 1V9.6L3 7H.6Z" fill="none" stroke="#fff" stroke-width="1"/><path d="M7.8 3.4C8.8 4.4 8.8 6.2 7.8 7.2M9.6 2C11.4 3.8 11.4 6.8 9.6 8.6M11.4 .6C14 3.2 14 7.4 11.4 10" fill="none" stroke="#fff" stroke-width=".9"/></svg>
<span style="top:1045.22px;font-size:11.60px;line-height:1;color:#fff;letter-spacing:-0.257px;left:1814.64px;">5:49 PM</span>
<span style="top:1062.26px;font-size:11.60px;line-height:1;color:#fff;letter-spacing:0.161px;left:1812.00px;">3/7/2020</span>
<svg style="left:1878.00px;top:1050.72px;width:16.08px;height:15.12px;" viewBox="0 0 13.4 12.6"><path d="M.6 .6H12.8V9.4H5.2L2.6 12V9.4H.6Z" fill="#fff"/><path d="M2.6 3H10.8M2.6 5H10.8M2.6 7H8" stroke="#101010" stroke-width=".8"/></svg>
<div style="left:1886.88px;top:1059.36px;width:13.92px;height:13.92px;background:#101010;border:1px solid #c8c8c8;border-radius:50%;"></div>
<span style="top:1062.75px;font-size:9.60px;line-height:1;color:#fff;font-weight:bold;left:1891.17px;">8</span>
<div style="left:1915.68px;top:1039.92px;width:1.08px;height:40.08px;background:#4a4a4a;"></div>
</div></body></html>
